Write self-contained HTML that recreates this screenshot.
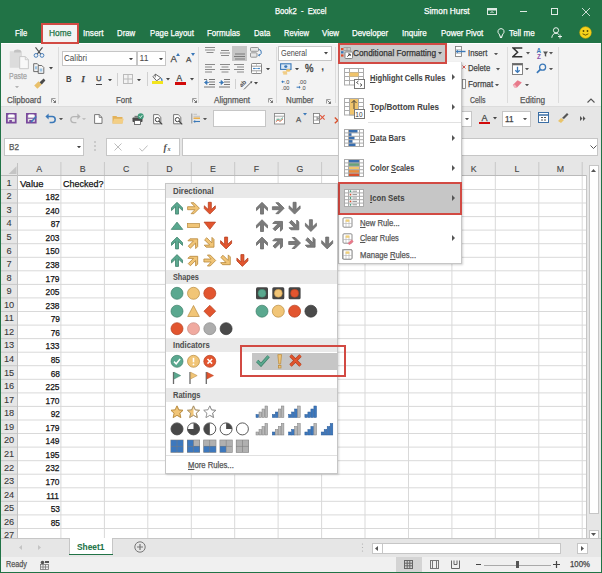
<!DOCTYPE html><html><head><meta charset="utf-8"><style>
html,body{margin:0;padding:0;}
body{width:602px;height:573px;position:relative;overflow:hidden;background:#fff;font-family:"Liberation Sans",sans-serif;}
div{position:absolute;box-sizing:border-box;}
.t{white-space:nowrap;line-height:1;-webkit-text-stroke:0.25px currentColor;}
</style></head><body>

<div style="left:0px;top:0px;width:602px;height:43px;background:#217346"></div>
<div style="left:1px;top:43px;width:600px;height:63px;background:#f3f3f3;border-top:1px solid #fff"></div>
<div style="left:1px;top:106px;width:600px;height:432px;background:#e6e6e6"></div>
<div style="left:1px;top:106px;width:600px;height:1px;background:#dcdcdc"></div>
<div style="left:0px;top:43px;width:1px;height:530px;background:#217346"></div>
<div style="left:601px;top:43px;width:1px;height:530px;background:#217346"></div>
<div style="left:0px;top:572px;width:602px;height:1px;background:#217346"></div>
<div class="t" style="left:274.60px;top:7.05px;font-size:8.8px;transform:scaleX(0.8685);transform-origin:0 0;color:#fff">Book2&nbsp; -&nbsp; Excel</div>
<div class="t" style="left:424.40px;top:7.05px;font-size:8.8px;transform:scaleX(0.9421);transform-origin:0 0;color:#fff">Simon Hurst</div>
<svg style="position:absolute;left:487px;top:8px;" width="10" height="7" viewBox="0 0 10 7"><rect x="0.5" y="0.5" width="9" height="6" fill="none" stroke="rgba(255,255,255,0.85)"/><rect x="1" y="1" width="8" height="1.5" fill="rgba(255,255,255,0.85)"/><path d="M3.5 5L5 3.5L6.5 5" stroke="#fff" fill="none" stroke-width="0.9"/></svg>
<div style="left:520px;top:10.5px;width:7px;height:1px;background:rgba(255,255,255,0.85)"></div>
<div style="left:551px;top:7.5px;width:7px;height:7px;border:1px solid rgba(255,255,255,0.85)"></div>
<svg style="position:absolute;left:582px;top:7.5px;" width="8" height="8" viewBox="0 0 8 8"><path d="M0 0L8 8M8 0L0 8" stroke="rgba(255,255,255,0.85)" stroke-width="0.9"/></svg>
<div style="left:41px;top:23px;width:38px;height:21px;background:#f3f3f3;border:2px solid #d24a43"></div>
<div class="t" style="left:14.75px;top:29.15px;font-size:8.8px;transform:scaleX(0.8646);transform-origin:0 0;color:#fff">File</div>
<div class="t" style="left:48.50px;top:29.15px;font-size:8.8px;transform:scaleX(0.9491);transform-origin:0 0;color:#217346">Home</div>
<div class="t" style="left:83.00px;top:29.15px;font-size:8.8px;transform:scaleX(0.9364);transform-origin:0 0;color:#fff">Insert</div>
<div class="t" style="left:117.30px;top:29.15px;font-size:8.8px;transform:scaleX(0.8857);transform-origin:0 0;color:#fff">Draw</div>
<div class="t" style="left:149.50px;top:29.15px;font-size:8.8px;transform:scaleX(0.8884);transform-origin:0 0;color:#fff">Page Layout</div>
<div class="t" style="left:206.90px;top:29.15px;font-size:8.8px;transform:scaleX(0.9020);transform-origin:0 0;color:#fff">Formulas</div>
<div class="t" style="left:253.60px;top:29.15px;font-size:8.8px;transform:scaleX(0.8812);transform-origin:0 0;color:#fff">Data</div>
<div class="t" style="left:283.50px;top:29.15px;font-size:8.8px;transform:scaleX(0.8627);transform-origin:0 0;color:#fff">Review</div>
<div class="t" style="left:321.70px;top:29.15px;font-size:8.8px;transform:scaleX(0.8985);transform-origin:0 0;color:#fff">View</div>
<div class="t" style="left:352.30px;top:29.15px;font-size:8.8px;transform:scaleX(0.8996);transform-origin:0 0;color:#fff">Developer</div>
<div class="t" style="left:402.30px;top:29.15px;font-size:8.8px;transform:scaleX(0.9173);transform-origin:0 0;color:#fff">Inquire</div>
<div class="t" style="left:441.00px;top:29.15px;font-size:8.8px;transform:scaleX(0.9010);transform-origin:0 0;color:#fff">Power Pivot</div>
<div class="t" style="left:508.70px;top:29.15px;font-size:8.8px;transform:scaleX(0.9213);transform-origin:0 0;color:#fff">Tell me</div>
<svg style="position:absolute;left:497px;top:28px;" width="8" height="10" viewBox="0 0 8 10"><path d="M4 0.6A3 3 0 0 0 1.9 5.8L2.7 7V8.3H5.3V7L6.1 5.8A3 3 0 0 0 4 0.6Z" fill="none" stroke="#fff" stroke-width="0.9"/><path d="M2.9 9.5H5.1" stroke="#fff" stroke-width="0.9"/></svg>
<svg style="position:absolute;left:551px;top:27px;" width="12" height="12" viewBox="0 0 12 12"><circle cx="5" cy="3.3" r="2.6" fill="none" stroke="#fff" stroke-width="0.9"/><path d="M0.8 10.8C1 7.8 2.8 6.3 5 6.3C6.2 6.3 7.2 6.8 7.9 7.5" fill="none" stroke="#fff" stroke-width="0.9"/><path d="M9 7.5V11.5M7 9.5H11" stroke="#fff" stroke-width="0.9"/></svg>
<svg style="position:absolute;left:579px;top:26px;" width="13" height="13" viewBox="0 0 13 13"><circle cx="6.5" cy="6.5" r="5.8" fill="#f7d21c" stroke="#e0b000" stroke-width="0.6"/><circle cx="4.5" cy="5" r="0.9" fill="#5a4a00"/><circle cx="8.5" cy="5" r="0.9" fill="#5a4a00"/><path d="M3.6 7.8Q6.5 10.5 9.4 7.8" stroke="#5a4a00" fill="none" stroke-width="0.9"/></svg>
<svg style="position:absolute;left:8px;top:48px;" width="22" height="22" viewBox="0 0 22 22"><rect x="1.8" y="3.2" width="12.2" height="16.6" fill="#dcdcdc"/><path d="M6 4.5V3.2Q6 1.5 9.5 1.5Q13 1.5 13 3.2V4.5Z" fill="#c2c2c2"/><path d="M11.7 8.6H17.3L20.4 11.7V20.7H11.7Z" fill="#f8f8f8" stroke="#c4c4c4" stroke-width="0.9"/><path d="M17.3 8.6V11.7H20.4" fill="none" stroke="#c4c4c4" stroke-width="0.8"/></svg>
<div class="t" style="left:9.00px;top:72.2px;font-size:8.5px;transform:scaleX(0.8242);transform-origin:0 0;color:#a3a3a3">Paste</div>
<svg style="position:absolute;left:15.3px;top:85.5px;" width="4" height="2.5" viewBox="0 0 4 2.5"><path d="M0 0H4L2 2.4Z" fill="#b5b5b5"/></svg>
<svg style="position:absolute;left:33px;top:47px;" width="12" height="11" viewBox="0 0 12 11"><path d="M2.5 0.3L7.8 7.2M9.5 0.3L4.2 7.2" stroke="#505050" stroke-width="1.1"/><circle cx="3" cy="8.4" r="1.9" fill="none" stroke="#4a80bb" stroke-width="1"/><circle cx="9" cy="8.4" r="1.9" fill="none" stroke="#4a80bb" stroke-width="1"/></svg>
<svg style="position:absolute;left:33px;top:63px;" width="12" height="11" viewBox="0 0 12 11"><path d="M0.7 0.7H4.3L5.8 2.2V8.6H0.7Z" fill="#f4f4f4" stroke="#606060" stroke-width="0.9"/><path d="M5.2 2.5H8.8L10.8 4.5V10.4H5.2Z" fill="#f4f4f4" stroke="#606060" stroke-width="0.9"/><rect x="2" y="3.3" width="2" height="3" fill="#9cc4e4"/><rect x="6.7" y="5.5" width="2.6" height="3" fill="#9cc4e4"/></svg>
<svg style="position:absolute;left:48.5px;top:67px;" width="4" height="2.5" viewBox="0 0 4 2.5"><path d="M0 0H4L2 2.4Z" fill="#444"/></svg>
<svg style="position:absolute;left:33px;top:78px;" width="13" height="11" viewBox="0 0 13 11"><path d="M1.2 7.6L5.6 3.2L8.8 6.4L4.4 10.8Z" fill="#e9c06a"/><path d="M6.6 4.2L10.6 0.6L12.4 2.4L8.8 6.4Z" fill="#4a4a4a"/></svg>
<div class="t" style="left:7.00px;top:96.47px;font-size:8.3px;transform:scaleX(0.9627);transform-origin:0 0;color:#5a5a5a">Clipboard</div>
<svg style="position:absolute;left:51px;top:98px;" width="5" height="5" viewBox="0 0 5 5"><path d="M0.5 4.5V0.5H4.5" fill="none" stroke="#888" stroke-width="0.8"/><path d="M1.5 1.5L4.5 4.5M4.5 2.5V4.5H2.5" fill="none" stroke="#666" stroke-width="0.9"/></svg>
<div style="left:58px;top:47px;width:1px;height:57px;background:#dcdcdc"></div>
<div style="left:61.5px;top:51px;width:75px;height:15px;background:#fff;border:1px solid #c6c6c6"></div>
<div class="t" style="left:64.00px;top:54.25px;font-size:8.8px;transform:scaleX(0.9219);transform-origin:0 0;color:#4a4a4a;-webkit-text-stroke:0">Calibri</div>
<svg style="position:absolute;left:129px;top:57.5px;" width="4" height="2.5" viewBox="0 0 4 2.5"><path d="M0 0H4L2 2.4Z" fill="#444"/></svg>
<div style="left:136.5px;top:51px;width:29.5px;height:15px;background:#fff;border:1px solid #c6c6c6"></div>
<div class="t" style="left:139.50px;top:54.42px;font-size:8.6px;color:#4a4a4a;-webkit-text-stroke:0">11</div>
<svg style="position:absolute;left:159px;top:57.5px;" width="4" height="2.5" viewBox="0 0 4 2.5"><path d="M0 0H4L2 2.4Z" fill="#444"/></svg>
<div class="t" style="left:170.50px;top:54.37px;font-size:9.6px;color:#444">A</div>
<svg style="position:absolute;left:176px;top:53px;" width="4" height="3" viewBox="0 0 4 3"><path d="M0 3L2 0L4 3Z" fill="#3a78b8"/></svg>
<div class="t" style="left:186.00px;top:55.73px;font-size:8px;color:#444">A</div>
<svg style="position:absolute;left:191px;top:53px;" width="4" height="3" viewBox="0 0 4 3"><path d="M0 0L2 3L4 0Z" fill="#3a78b8"/></svg>
<div class="t" style="left:65.80px;top:74.92px;font-size:8.6px;font-weight:bold;-webkit-text-stroke:0.05px currentColor;transform:scaleX(0.9044);transform-origin:0 0;color:#444">B</div>
<div class="t" style="left:81.50px;top:75.3px;font-size:8.5px;color:#444;font-style:italic;font-family:'Liberation Serif',serif;font-weight:bold">I</div>
<div class="t" style="left:96.00px;top:75.4px;font-size:7.8px;color:#444">U</div>
<div style="left:96px;top:84px;width:6px;height:1px;background:#444"></div>
<svg style="position:absolute;left:108px;top:78.5px;" width="4" height="2.5" viewBox="0 0 4 2.5"><path d="M0 0H4L2 2.4Z" fill="#444"/></svg>
<div style="left:117px;top:73px;width:1px;height:13px;background:#d0d0d0"></div>
<svg style="position:absolute;left:123px;top:74px;" width="10" height="10" viewBox="0 0 10 10"><rect x="0.5" y="0.5" width="9" height="9" fill="none" stroke="#bbb"/><path d="M5 0.5V9.5M0.5 5H9.5" stroke="#bbb"/></svg>
<svg style="position:absolute;left:137px;top:78.5px;" width="4" height="2.5" viewBox="0 0 4 2.5"><path d="M0 0H4L2 2.4Z" fill="#444"/></svg>
<div style="left:146.5px;top:72px;width:1px;height:14px;background:#d0d0d0"></div>
<svg style="position:absolute;left:151.5px;top:73px;" width="12" height="9" viewBox="0 0 12 9"><path d="M3.5 1.2L1 3.7L4.6 7.8L8.8 4.8Z" fill="#fff" stroke="#555" stroke-width="0.9" stroke-linejoin="round"/><path d="M3.3 1V4.4" stroke="#555" stroke-width="0.8"/><path d="M8.8 4.8Q10.8 5.6 10.6 7.6Q10.2 8.6 9.4 7.8Q9 6.4 8.8 4.8Z" fill="#3a78b8"/></svg>
<div style="left:152px;top:81px;width:11px;height:3px;background:#f2e41c"></div>
<svg style="position:absolute;left:166px;top:78px;" width="4" height="2.5" viewBox="0 0 4 2.5"><path d="M0 0H4L2 2.4Z" fill="#444"/></svg>
<div class="t" style="left:176.50px;top:74.3px;font-size:8.5px;color:#444">A</div>
<div style="left:175px;top:82px;width:11px;height:3px;background:#d20a0a"></div>
<svg style="position:absolute;left:189.5px;top:78px;" width="4" height="2.5" viewBox="0 0 4 2.5"><path d="M0 0H4L2 2.4Z" fill="#444"/></svg>
<div class="t" style="left:115.60px;top:96.47px;font-size:8.3px;transform:scaleX(0.9518);transform-origin:0 0;color:#5a5a5a">Font</div>
<svg style="position:absolute;left:192px;top:98px;" width="5" height="5" viewBox="0 0 5 5"><path d="M0.5 4.5V0.5H4.5" fill="none" stroke="#888" stroke-width="0.8"/><path d="M1.5 1.5L4.5 4.5M4.5 2.5V4.5H2.5" fill="none" stroke="#666" stroke-width="0.9"/></svg>
<div style="left:198px;top:47px;width:1px;height:56px;background:#dcdcdc"></div>
<div style="left:232px;top:46px;width:15px;height:15px;background:#c6c6c6"></div>
<svg style="position:absolute;left:205px;top:46px;" width="10" height="12" viewBox="0 0 10 12"><rect x="0" y="1" width="10" height="1" fill="#8a8a8a"/><rect x="0" y="3.5" width="10" height="1" fill="#8a8a8a"/><rect x="1.5" y="6" width="7" height="1" fill="#8a8a8a"/></svg>
<svg style="position:absolute;left:219.5px;top:49px;" width="10" height="12" viewBox="0 0 10 12"><rect x="1" y="1" width="8" height="1" fill="#8a8a8a"/><rect x="0" y="3.5" width="10" height="1" fill="#8a8a8a"/><rect x="1" y="6" width="8" height="1" fill="#8a8a8a"/></svg>
<svg style="position:absolute;left:233.5px;top:53px;" width="11" height="12" viewBox="0 0 11 12"><rect x="1" y="0.5" width="10" height="1" fill="#7a7a7a"/><rect x="0" y="3" width="12" height="1" fill="#7a7a7a"/><rect x="1" y="5.5" width="10" height="1" fill="#7a7a7a"/></svg>
<svg style="position:absolute;left:250px;top:47px;" width="13" height="11" viewBox="0 0 13 11"><rect x="0.5" y="0.5" width="8" height="3.8" rx="0.8" fill="#e6e6e6" stroke="#808080" stroke-width="0.8"/><rect x="0.5" y="5.8" width="6.5" height="4.4" rx="0.8" fill="#e6e6e6" stroke="#808080" stroke-width="0.8"/><path d="M8.8 2.4Q12 2.8 11.2 6.4Q10.6 8 8.6 8.2" stroke="#3a78b8" fill="none" stroke-width="1"/><path d="M8 8.2L9.6 6.8V9.6Z" fill="#3a78b8"/></svg>
<svg style="position:absolute;left:204.5px;top:64px;" width="10" height="12" viewBox="0 0 10 12"><rect x="0" y="0" width="10" height="1" fill="#8a8a8a"/><rect x="0" y="2.5" width="7" height="1" fill="#8a8a8a"/><rect x="0" y="5" width="10" height="1" fill="#8a8a8a"/><rect x="0" y="7.5" width="7" height="1" fill="#8a8a8a"/></svg>
<svg style="position:absolute;left:219.5px;top:64px;" width="10" height="12" viewBox="0 0 10 12"><rect x="0" y="0" width="10" height="1" fill="#8a8a8a"/><rect x="1.5" y="2.5" width="7" height="1" fill="#8a8a8a"/><rect x="0" y="5" width="10" height="1" fill="#8a8a8a"/><rect x="1.5" y="7.5" width="7" height="1" fill="#8a8a8a"/></svg>
<svg style="position:absolute;left:234px;top:64px;" width="10" height="12" viewBox="0 0 10 12"><rect x="0" y="0" width="10" height="1" fill="#8a8a8a"/><rect x="3" y="2.5" width="7" height="1" fill="#8a8a8a"/><rect x="0" y="5" width="10" height="1" fill="#8a8a8a"/><rect x="3" y="7.5" width="7" height="1" fill="#8a8a8a"/></svg>
<svg style="position:absolute;left:250.5px;top:62.5px;" width="11" height="11" viewBox="0 0 11 11"><rect x="0.5" y="0.5" width="10" height="10" rx="0.8" fill="#fff" stroke="#777" stroke-width="0.9"/><path d="M0.5 3.2H10.5M0.5 7.8H10.5" stroke="#888" stroke-width="0.8"/><path d="M5.5 0.5V3.2M5.5 7.8V10.5" stroke="#aaa" stroke-width="0.7"/><path d="M2.2 5.5H8.8" stroke="#6fa8d8" stroke-width="0.9"/><circle cx="3" cy="5.5" r="0.8" fill="#3a78b8"/><circle cx="8" cy="5.5" r="0.8" fill="#3a78b8"/></svg>
<svg style="position:absolute;left:265.5px;top:67.5px;" width="4" height="2.5" viewBox="0 0 4 2.5"><path d="M0 0H4L2 2.4Z" fill="#444"/></svg>
<svg style="position:absolute;left:204px;top:79px;" width="11" height="9" viewBox="0 0 11 9"><path d="M5 0.5H11M5 3H11M5 5.5H11M0 8H11M0 0.5H3" stroke="#777" stroke-width="1"/><path d="M0.5 3.5L3 1.5V5.5Z M1 3.5H5" fill="#3a78b8" stroke="#3a78b8" stroke-width="0.8"/></svg>
<svg style="position:absolute;left:219px;top:79px;" width="11" height="9" viewBox="0 0 11 9"><path d="M5 0.5H11M5 3H11M5 5.5H11M0 8H11" stroke="#777" stroke-width="1"/><path d="M4.5 3.5L2 1.5V5.5Z M0 3.5H3" fill="#3a78b8" stroke="#3a78b8" stroke-width="0.8"/></svg>
<div style="left:235px;top:79px;width:1px;height:10px;background:#d0d0d0"></div>
<svg style="position:absolute;left:240px;top:78.5px;" width="13" height="11" viewBox="0 0 13 11"><text x="0" y="0" font-size="6.2" fill="#555" font-family="Liberation Sans" font-weight="bold" transform="translate(1.6 8.6) rotate(-45)">ab</text><path d="M4 10.4L11.4 3" stroke="#555" stroke-width="0.9"/><path d="M12.4 2L10 2.8L11.6 4.4Z" fill="#555"/></svg>
<svg style="position:absolute;left:253.5px;top:82px;" width="4" height="2.5" viewBox="0 0 4 2.5"><path d="M0 0H4L2 2.4Z" fill="#444"/></svg>
<div class="t" style="left:213.50px;top:96.47px;font-size:8.3px;transform:scaleX(0.9758);transform-origin:0 0;color:#5a5a5a">Alignment</div>
<svg style="position:absolute;left:268px;top:98px;" width="5" height="5" viewBox="0 0 5 5"><path d="M0.5 4.5V0.5H4.5" fill="none" stroke="#888" stroke-width="0.8"/><path d="M1.5 1.5L4.5 4.5M4.5 2.5V4.5H2.5" fill="none" stroke="#666" stroke-width="0.9"/></svg>
<div style="left:275.5px;top:47px;width:1px;height:56px;background:#dcdcdc"></div>
<div style="left:278px;top:45.5px;width:53.5px;height:15px;background:#fff;border:1px solid #c6c6c6"></div>
<div class="t" style="left:281.00px;top:49.35px;font-size:8.8px;transform:scaleX(0.8299);transform-origin:0 0;color:#4a4a4a;-webkit-text-stroke:0">General</div>
<svg style="position:absolute;left:324px;top:52px;" width="4" height="2.5" viewBox="0 0 4 2.5"><path d="M0 0H4L2 2.4Z" fill="#444"/></svg>
<svg style="position:absolute;left:280px;top:62.5px;" width="12" height="12" viewBox="0 0 12 12"><rect x="0.6" y="0.8" width="10.4" height="5.6" fill="#dbe8f5" stroke="#3a78b8" stroke-width="1.1"/><ellipse cx="5.8" cy="3.6" rx="1.6" ry="1.4" fill="#3a78b8"/><ellipse cx="8.3" cy="7.4" rx="2.3" ry="1.3" fill="#f0c46c"/><rect x="2.6" y="8.4" width="4.5" height="1.4" fill="#f0c46c"/><rect x="3.2" y="10.2" width="4" height="1.3" fill="#f0c46c"/></svg>
<svg style="position:absolute;left:295px;top:67.5px;" width="4" height="2.5" viewBox="0 0 4 2.5"><path d="M0 0H4L2 2.4Z" fill="#444"/></svg>
<div class="t" style="left:305.00px;top:64.03px;font-size:10px;transform:scaleX(0.9551);transform-origin:0 0;color:#444;-webkit-text-stroke:0.35px #444">%</div>
<div class="t" style="left:321.30px;top:62.03px;font-size:10px;font-weight:bold;-webkit-text-stroke:0.05px currentColor;color:#444">,</div>
<svg style="position:absolute;left:280.5px;top:78.5px;" width="11" height="11" viewBox="0 0 11 11"><text x="3.6" y="5" font-size="5.6" fill="#444" font-family="Liberation Sans">.0</text><text x="0.6" y="10.6" font-size="5.6" fill="#444" font-family="Liberation Sans">.00</text><path d="M0.8 2.8H3.6" stroke="#3a78b8" stroke-width="1"/><path d="M0.4 2.8L2 1.3V4.3Z" fill="#3a78b8"/></svg>
<svg style="position:absolute;left:295.5px;top:78.5px;" width="11" height="11" viewBox="0 0 11 11"><text x="2.5" y="5" font-size="5.6" fill="#444" font-family="Liberation Sans">.00</text><text x="5" y="10.6" font-size="5.6" fill="#444" font-family="Liberation Sans">.0</text><path d="M0.6 8.2H4" stroke="#3a78b8" stroke-width="1"/><path d="M4.6 8.2L3 6.7V9.7Z" fill="#3a78b8"/></svg>
<div class="t" style="left:285.60px;top:96.47px;font-size:8.3px;transform:scaleX(0.9388);transform-origin:0 0;color:#5a5a5a">Number</div>
<svg style="position:absolute;left:326px;top:99px;" width="5" height="5" viewBox="0 0 5 5"><path d="M0.5 4.5V0.5H4.5" fill="none" stroke="#888" stroke-width="0.8"/><path d="M1.5 1.5L4.5 4.5M4.5 2.5V4.5H2.5" fill="none" stroke="#666" stroke-width="0.9"/></svg>
<div style="left:334.5px;top:47px;width:1px;height:56px;background:#dcdcdc"></div>
<svg style="position:absolute;left:455px;top:46px;" width="11" height="12" viewBox="0 0 11 12"><rect x="0.5" y="0.5" width="6" height="10" fill="#fff" stroke="#777" stroke-width="0.8"/><path d="M0.5 3.8H6.5M0.5 7.2H6.5" stroke="#999" stroke-width="0.7"/><path d="M1 5.5H10.5" stroke="#3a78b8" stroke-width="1.4"/><path d="M1 5.5L3 3.8V7.2Z" fill="#3a78b8"/></svg>
<div class="t" style="left:468.00px;top:48.85px;font-size:8.8px;transform:scaleX(0.8773);transform-origin:0 0;color:#444">Insert</div>
<svg style="position:absolute;left:494px;top:52.5px;" width="4" height="2.5" viewBox="0 0 4 2.5"><path d="M0 0H4L2 2.4Z" fill="#555"/></svg>
<svg style="position:absolute;left:462px;top:65px;" width="4" height="5" viewBox="0 0 4 5"><path d="M0.5 0.5L3.5 3.5M3.5 0.5L0.5 3.5" stroke="#d24a43" stroke-width="0.9"/></svg>
<div class="t" style="left:468.00px;top:64.15px;font-size:8.8px;transform:scaleX(0.8729);transform-origin:0 0;color:#444">Delete</div>
<svg style="position:absolute;left:496px;top:68px;" width="4" height="2.5" viewBox="0 0 4 2.5"><path d="M0 0H4L2 2.4Z" fill="#555"/></svg>
<svg style="position:absolute;left:461.5px;top:79px;" width="4" height="10" viewBox="0 0 4 10"><rect x="0.5" y="0.5" width="3" height="9" fill="#fff" stroke="#777" stroke-width="0.8"/></svg>
<div class="t" style="left:468.00px;top:79.65px;font-size:8.8px;transform:scaleX(0.9048);transform-origin:0 0;color:#444">Format</div>
<svg style="position:absolute;left:495px;top:83.5px;" width="4" height="2.5" viewBox="0 0 4 2.5"><path d="M0 0H4L2 2.4Z" fill="#555"/></svg>
<div class="t" style="left:470.30px;top:96.47px;font-size:8.3px;transform:scaleX(0.8339);transform-origin:0 0;color:#5a5a5a">Cells</div>
<div style="left:506.5px;top:47px;width:1px;height:56px;background:#dcdcdc"></div>
<svg style="position:absolute;left:511.5px;top:47px;" width="11" height="11" viewBox="0 0 11 11"><path d="M10.3 0.9H1L5.6 5.3L1 9.7H10.3" fill="none" stroke="#333" stroke-width="1.5" stroke-linejoin="miter"/></svg>
<svg style="position:absolute;left:526px;top:52px;" width="4" height="2.5" viewBox="0 0 4 2.5"><path d="M0 0H4L2 2.4Z" fill="#555"/></svg>
<svg style="position:absolute;left:535.5px;top:46.5px;" width="15" height="13" viewBox="0 0 15 13"><text x="0.6" y="5.5" font-size="6.3" fill="#3a78b8" font-family="Liberation Sans" font-weight="bold">A</text><text x="0.9" y="12.3" font-size="6.3" fill="#8b4fa8" font-family="Liberation Sans" font-weight="bold">Z</text><path d="M7 4.6H12L10.2 7V9.8L8.8 8.9V7Z" fill="#555"/></svg>
<svg style="position:absolute;left:549px;top:52px;" width="4" height="2.5" viewBox="0 0 4 2.5"><path d="M0 0H4L2 2.4Z" fill="#555"/></svg>
<svg style="position:absolute;left:511.5px;top:63px;" width="11" height="12" viewBox="0 0 11 12"><rect x="0.5" y="0.5" width="10" height="11" fill="#fff" stroke="#777" stroke-width="0.9"/><rect x="0.5" y="0.5" width="10" height="1.8" fill="#666"/><path d="M5.5 3.8V9.3M3.3 7.2L5.5 9.4L7.7 7.2" stroke="#3a78b8" stroke-width="1.3" fill="none"/></svg>
<svg style="position:absolute;left:525px;top:67.5px;" width="4" height="2.5" viewBox="0 0 4 2.5"><path d="M0 0H4L2 2.4Z" fill="#555"/></svg>
<svg style="position:absolute;left:536px;top:63px;" width="11" height="11" viewBox="0 0 11 11"><circle cx="6.6" cy="4.2" r="3" fill="none" stroke="#3a78b8" stroke-width="1.3"/><path d="M4.4 6.4L0.9 9.9" stroke="#3a78b8" stroke-width="1.7"/></svg>
<svg style="position:absolute;left:549px;top:67.5px;" width="4" height="2.5" viewBox="0 0 4 2.5"><path d="M0 0H4L2 2.4Z" fill="#555"/></svg>
<svg style="position:absolute;left:512px;top:78.5px;" width="11" height="9" viewBox="0 0 11 9"><path d="M0.8 6L5.6 1.2L9.8 3.6L5 8.4H2.6Z" fill="#e8798a"/><path d="M0.8 6L2.6 8.4H5L3 5.6Z" fill="#f2b4be"/></svg>
<svg style="position:absolute;left:525px;top:83.5px;" width="4" height="2.5" viewBox="0 0 4 2.5"><path d="M0 0H4L2 2.4Z" fill="#555"/></svg>
<div class="t" style="left:520.00px;top:96.47px;font-size:8.3px;transform:scaleX(0.9843);transform-origin:0 0;color:#5a5a5a">Editing</div>
<div style="left:558.3px;top:47px;width:1px;height:56px;background:#dcdcdc"></div>
<svg style="position:absolute;left:587px;top:98px;" width="8" height="5" viewBox="0 0 8 5"><path d="M0.5 4.5L4 1L7.5 4.5" stroke="#555" fill="none" stroke-width="1.1"/></svg>
<svg style="position:absolute;left:6px;top:113px;" width="11" height="11" viewBox="0 0 11 11"><path d="M0.9 0.9H9.7V9.7H0.9Z" fill="none" stroke="#7a4a9c" stroke-width="1.8"/><rect x="2.8" y="1.5" width="5" height="3.2" fill="#fff"/><rect x="1.8" y="4.7" width="7" height="1" fill="#7a4a9c"/><rect x="3.3" y="7" width="2.6" height="2" fill="#7a4a9c"/></svg>
<svg style="position:absolute;left:26px;top:113px;" width="11" height="11" viewBox="0 0 11 11"><path d="M0.9 0.9H9.7V9.7H0.9Z" fill="none" stroke="#7a4a9c" stroke-width="1.8"/><rect x="2.8" y="1.5" width="5" height="3.2" fill="#fff"/><rect x="1.8" y="4.7" width="7" height="1" fill="#7a4a9c"/><rect x="3.3" y="7" width="2.6" height="2" fill="#7a4a9c"/><path d="M5 9.3L10.2 3.6" stroke="#3a78b8" stroke-width="1.5"/></svg>
<svg style="position:absolute;left:44.5px;top:113px;" width="12" height="11" viewBox="0 0 12 11"><path d="M2.8 3.6H7.2A3 3 0 0 1 7.2 9.6H4.6" fill="none" stroke="#3a78b8" stroke-width="1.5"/><path d="M0.4 3.6L3.6 0.6V6.6Z" fill="#3a78b8"/></svg>
<svg style="position:absolute;left:58.5px;top:117.5px;" width="4" height="2.5" viewBox="0 0 4 2.5"><path d="M0 0H4L2 2.4Z" fill="#555"/></svg>
<svg style="position:absolute;left:68.5px;top:113px;" width="12" height="11" viewBox="0 0 12 11"><path d="M9.2 3.6H4.8A3 3 0 0 0 4.8 9.6H7.4" fill="none" stroke="#b5b5b5" stroke-width="1.3"/><path d="M11.6 3.6L8.4 0.6V6.6Z" fill="#b5b5b5"/></svg>
<svg style="position:absolute;left:82px;top:117.5px;" width="4" height="2.5" viewBox="0 0 4 2.5"><path d="M0 0H4L2 2.4Z" fill="#c0c0c0"/></svg>
<svg style="position:absolute;left:93.5px;top:114px;" width="9" height="10" viewBox="0 0 9 10"><path d="M0.6 0.6H5.2L8 3.4V9.4H0.6Z" fill="#fff" stroke="#6a6a6a" stroke-width="0.9"/><path d="M5.2 0.6V3.4H8" fill="none" stroke="#6a6a6a" stroke-width="0.8"/></svg>
<svg style="position:absolute;left:112px;top:114.5px;" width="12" height="9" viewBox="0 0 12 9"><path d="M0.5 1H4.3L5.3 2H10.5V8.5H0.5Z" fill="#e3b25a"/><path d="M0.5 8.5L2 3.8H11.8L10.4 8.5Z" fill="#f3cf86"/></svg>
<svg style="position:absolute;left:132px;top:112.5px;" width="12" height="12" viewBox="0 0 12 12"><rect x="0.5" y="4.5" width="10" height="4.5" rx="0.8" fill="#4a4a4a"/><rect x="2.5" y="7.5" width="6" height="4" fill="#fff" stroke="#555" stroke-width="0.8"/><rect x="2.5" y="2.8" width="5" height="1.7" fill="#777"/><circle cx="8.7" cy="3.3" r="3" fill="#3f9a7a"/><path d="M7.2 3.3L8.4 4.5L10.2 2.3" stroke="#fff" fill="none" stroke-width="0.9"/></svg>
<svg style="position:absolute;left:153.2px;top:113.5px;" width="10" height="11" viewBox="0 0 10 11"><path d="M0.6 0.6H5.2L7.8 3.2V9.8H0.6Z" fill="#fff" stroke="#6a6a6a" stroke-width="0.9"/><circle cx="4.4" cy="5.6" r="2.1" fill="none" stroke="#444" stroke-width="1"/><path d="M5.9 7.1L9.2 10.4" stroke="#444" stroke-width="1.3"/></svg>
<svg style="position:absolute;left:172.5px;top:113.5px;" width="10" height="11" viewBox="0 0 10 11"><path d="M0.6 0.6H5.2L7.8 3.2V9.8H0.6Z" fill="#fff" stroke="#6a6a6a" stroke-width="0.9"/><circle cx="4.4" cy="5.6" r="2.1" fill="none" stroke="#444" stroke-width="1"/><path d="M5.9 7.1L9.2 10.4" stroke="#444" stroke-width="1.3"/></svg>
<svg style="position:absolute;left:190.5px;top:113px;" width="10" height="11" viewBox="0 0 10 11"><path d="M0.8 0.5V10.5" stroke="#888" stroke-width="0.9"/><path d="M2.5 1.3H6M2.5 3.3H9" stroke="#bdbdbd" stroke-width="0.9"/><path d="M2.5 5.2H9" stroke="#e9a83a" stroke-width="1.4"/><path d="M3 8.5H9" stroke="#3a78b8" stroke-width="1.1"/><path d="M2.2 8.5L4.2 7V10Z" fill="#3a78b8"/></svg>
<svg style="position:absolute;left:203px;top:117.5px;" width="4" height="2.5" viewBox="0 0 4 2.5"><path d="M0 0H4L2 2.4Z" fill="#555"/></svg>
<div style="left:213px;top:110px;width:53px;height:17px;background:#fff;border:1px solid #c6c6c6"></div>
<svg style="position:absolute;left:273.5px;top:112.5px;" width="11" height="12" viewBox="0 0 11 12"><rect x="0.5" y="0.5" width="10" height="10.5" fill="#fff" stroke="#8a8a8a" stroke-width="0.9"/><path d="M0.5 3.2H10.5" stroke="#8a8a8a" stroke-width="0.8"/><path d="M2 5.2H9" stroke="#ccc" stroke-width="0.6"/><path d="M1.8 9L4 7L6 8.5L9 6" stroke="#e06040" fill="none" stroke-width="0.8"/><path d="M1.8 7.5L4 6L6.2 7.3L9 4.5" stroke="#3f9a7a" fill="none" stroke-width="0.8"/></svg>
<div class="t" style="left:296.30px;top:116.0px;font-size:7.8px;transform:scaleX(0.9950);transform-origin:0 0;color:#555">A</div>
<svg style="position:absolute;left:302.5px;top:113px;" width="4" height="2.5" viewBox="0 0 4 2.5"><path d="M0 0H4L2 2.4Z" fill="#3a78b8"/></svg>
<svg style="position:absolute;left:312.5px;top:113px;" width="13" height="11" viewBox="0 0 13 11"><rect x="0.5" y="0.5" width="6" height="10" fill="#fff" stroke="#777" stroke-width="0.8"/><path d="M0.5 3.8H6.5M0.5 7.2H6.5" stroke="#888" stroke-width="0.7"/><path d="M3.5 3.5L7 5.5L3.5 7.5" fill="#9a9a9a"/><path d="M7.2 2.2L11.6 6.6M11.6 2.2L7.2 6.6" stroke="#e0553a" stroke-width="1.1"/></svg>
<svg style="position:absolute;left:334px;top:116.5px;" width="5" height="7" viewBox="0 0 5 7"><path d="M0.8 0.6L3.8 3.4L0.8 6.2" stroke="#d9502c" stroke-width="1.4" fill="none"/></svg>
<div style="left:460px;top:110.5px;width:11.5px;height:16.5px;background:#fff;border:1px solid #c6c6c6;border-left:none"></div>
<svg style="position:absolute;left:464.7px;top:117.5px;" width="4" height="2.5" viewBox="0 0 4 2.5"><path d="M0 0H4L2 2.4Z" fill="#555"/></svg>
<div class="t" style="left:481.50px;top:114.38px;font-size:9px;color:#444">A</div>
<div style="left:479px;top:122px;width:11px;height:2px;background:#d20a0a"></div>
<svg style="position:absolute;left:493px;top:117px;" width="4" height="2.5" viewBox="0 0 4 2.5"><path d="M0 0H4L2 2.4Z" fill="#444"/></svg>
<div style="left:502px;top:110.5px;width:28.5px;height:16.5px;background:#fff;border:1px solid #c6c6c6"></div>
<div class="t" style="left:505.00px;top:115.56px;font-size:8.2px;color:#444">11</div>
<svg style="position:absolute;left:523.3px;top:117.5px;" width="4" height="2.5" viewBox="0 0 4 2.5"><path d="M0 0H4L2 2.4Z" fill="#555"/></svg>
<svg style="position:absolute;left:538px;top:112px;" width="11" height="11" viewBox="0 0 11 11"><rect x="0.5" y="0.5" width="10" height="10" fill="#fff" stroke="#3a6ea5"/><path d="M0.5 3H10.5" stroke="#3a6ea5" stroke-width="1.5"/><path d="M3 5.5H5M6 5.5H8M3 8H5M6 8H8" stroke="#555"/></svg>
<svg style="position:absolute;left:557px;top:112px;" width="12" height="11" viewBox="0 0 12 11"><path d="M1 9L4 6L7 8L4 11Z" fill="#e9c46a"/><path d="M5 6L10 1L11.5 2.5L7 7Z" fill="#555"/></svg>
<svg style="position:absolute;left:580px;top:116px;" width="6" height="5" viewBox="0 0 6 5"><path d="M0 0L2.5 2.5L0 5ZM3 0L5.5 2.5L3 5Z" fill="#555"/></svg>
<div style="left:4px;top:138px;width:80px;height:17.5px;background:#fff;border:1px solid #c6c6c6"></div>
<div class="t" style="left:9.00px;top:142.85px;font-size:8.8px;transform:scaleX(0.9276);transform-origin:0 0;color:#555">B2</div>
<svg style="position:absolute;left:77px;top:145.5px;" width="4" height="2.5" viewBox="0 0 4 2.5"><path d="M0 0H4L2 2.4Z" fill="#444"/></svg>
<svg style="position:absolute;left:94px;top:141px;" width="2" height="10" viewBox="0 0 2 10"><circle cx="1" cy="1" r="0.7" fill="#999"/><circle cx="1" cy="5" r="0.7" fill="#999"/><circle cx="1" cy="9" r="0.7" fill="#999"/></svg>
<div style="left:106px;top:138px;width:74px;height:17.5px;background:#fff;border:1px solid #c6c6c6"></div>
<svg style="position:absolute;left:114px;top:143px;" width="8" height="8" viewBox="0 0 8 8"><path d="M0.5 0.5L7.5 7.5M7.5 0.5L0.5 7.5" stroke="#b5b5b5" stroke-width="0.9"/></svg>
<svg style="position:absolute;left:138.5px;top:144.5px;" width="9" height="7" viewBox="0 0 9 7"><path d="M0.5 3.3L3.2 6.2L8.6 0.5" stroke="#b5b5b5" fill="none" stroke-width="0.9"/></svg>
<svg style="position:absolute;left:162.5px;top:141.5px;" width="11" height="11" viewBox="0 0 11 11"><text x="0.5" y="8.6" font-size="9.5" font-style="italic" font-weight="bold" fill="#505050" font-family="Liberation Serif">f</text><text x="4.6" y="8.6" font-size="6.2" font-style="italic" font-weight="bold" fill="#505050" font-family="Liberation Serif">x</text></svg>
<div style="left:182px;top:138px;width:416px;height:17.5px;background:#fff;border:1px solid #c6c6c6"></div>
<svg style="position:absolute;left:590px;top:145px;" width="7" height="4" viewBox="0 0 7 4"><path d="M0.5 0.5L3.5 3.5L6.5 0.5" stroke="#555" fill="none"/></svg>
<div style="left:18px;top:176px;width:569px;height:362px;background:#fff"></div>
<div style="left:1px;top:176px;width:17px;height:362px;background:#e6e6e6"></div>
<svg style="position:absolute;left:7.5px;top:165.5px;" width="9" height="8.5" viewBox="0 0 9 8.5"><path d="M8.5 0.3V8.3H0.3Z" fill="#c4c4c4"/></svg>
<div style="left:1px;top:175px;width:586px;height:1px;background:#bababa"></div>
<div style="left:17px;top:163px;width:1px;height:375px;background:#c2c2c2"></div>
<svg style="position:absolute;left:18px;top:176px;" width="569" height="362" viewBox="0 0 569 362"><rect x="42.4" y="0" width="1" height="362" fill="#d9d9d9"/><rect x="85.9" y="0" width="1" height="362" fill="#d9d9d9"/><rect x="129.3" y="0" width="1" height="362" fill="#d9d9d9"/><rect x="172.8" y="0" width="1" height="362" fill="#d9d9d9"/><rect x="216.2" y="0" width="1" height="362" fill="#d9d9d9"/><rect x="259.6" y="0" width="1" height="362" fill="#d9d9d9"/><rect x="303.1" y="0" width="1" height="362" fill="#d9d9d9"/><rect x="346.5" y="0" width="1" height="362" fill="#d9d9d9"/><rect x="390.0" y="0" width="1" height="362" fill="#d9d9d9"/><rect x="433.4" y="0" width="1" height="362" fill="#d9d9d9"/><rect x="476.8" y="0" width="1" height="362" fill="#d9d9d9"/><rect x="520.3" y="0" width="1" height="362" fill="#d9d9d9"/><rect x="563.7" y="0" width="1" height="362" fill="#d9d9d9"/><rect x="0" y="13.0" width="569" height="1" fill="#d9d9d9"/><rect x="0" y="26.5" width="569" height="1" fill="#d9d9d9"/><rect x="0" y="40.1" width="569" height="1" fill="#d9d9d9"/><rect x="0" y="53.6" width="569" height="1" fill="#d9d9d9"/><rect x="0" y="67.2" width="569" height="1" fill="#d9d9d9"/><rect x="0" y="80.8" width="569" height="1" fill="#d9d9d9"/><rect x="0" y="94.3" width="569" height="1" fill="#d9d9d9"/><rect x="0" y="107.9" width="569" height="1" fill="#d9d9d9"/><rect x="0" y="121.4" width="569" height="1" fill="#d9d9d9"/><rect x="0" y="135.0" width="569" height="1" fill="#d9d9d9"/><rect x="0" y="148.6" width="569" height="1" fill="#d9d9d9"/><rect x="0" y="162.1" width="569" height="1" fill="#d9d9d9"/><rect x="0" y="175.7" width="569" height="1" fill="#d9d9d9"/><rect x="0" y="189.2" width="569" height="1" fill="#d9d9d9"/><rect x="0" y="202.8" width="569" height="1" fill="#d9d9d9"/><rect x="0" y="216.4" width="569" height="1" fill="#d9d9d9"/><rect x="0" y="229.9" width="569" height="1" fill="#d9d9d9"/><rect x="0" y="243.5" width="569" height="1" fill="#d9d9d9"/><rect x="0" y="257.0" width="569" height="1" fill="#d9d9d9"/><rect x="0" y="270.6" width="569" height="1" fill="#d9d9d9"/><rect x="0" y="284.2" width="569" height="1" fill="#d9d9d9"/><rect x="0" y="297.7" width="569" height="1" fill="#d9d9d9"/><rect x="0" y="311.3" width="569" height="1" fill="#d9d9d9"/><rect x="0" y="324.8" width="569" height="1" fill="#d9d9d9"/><rect x="0" y="338.4" width="569" height="1" fill="#d9d9d9"/><rect x="0" y="352.0" width="569" height="1" fill="#d9d9d9"/><rect x="0" y="365.5" width="569" height="1" fill="#d9d9d9"/></svg>
<svg style="position:absolute;left:1px;top:176px;" width="16" height="362" viewBox="0 0 16 362"><rect x="0" y="13.0" width="16" height="1" fill="#c8c8c8"/><rect x="0" y="26.5" width="16" height="1" fill="#c8c8c8"/><rect x="0" y="40.1" width="16" height="1" fill="#c8c8c8"/><rect x="0" y="53.6" width="16" height="1" fill="#c8c8c8"/><rect x="0" y="67.2" width="16" height="1" fill="#c8c8c8"/><rect x="0" y="80.8" width="16" height="1" fill="#c8c8c8"/><rect x="0" y="94.3" width="16" height="1" fill="#c8c8c8"/><rect x="0" y="107.9" width="16" height="1" fill="#c8c8c8"/><rect x="0" y="121.4" width="16" height="1" fill="#c8c8c8"/><rect x="0" y="135.0" width="16" height="1" fill="#c8c8c8"/><rect x="0" y="148.6" width="16" height="1" fill="#c8c8c8"/><rect x="0" y="162.1" width="16" height="1" fill="#c8c8c8"/><rect x="0" y="175.7" width="16" height="1" fill="#c8c8c8"/><rect x="0" y="189.2" width="16" height="1" fill="#c8c8c8"/><rect x="0" y="202.8" width="16" height="1" fill="#c8c8c8"/><rect x="0" y="216.4" width="16" height="1" fill="#c8c8c8"/><rect x="0" y="229.9" width="16" height="1" fill="#c8c8c8"/><rect x="0" y="243.5" width="16" height="1" fill="#c8c8c8"/><rect x="0" y="257.0" width="16" height="1" fill="#c8c8c8"/><rect x="0" y="270.6" width="16" height="1" fill="#c8c8c8"/><rect x="0" y="284.2" width="16" height="1" fill="#c8c8c8"/><rect x="0" y="297.7" width="16" height="1" fill="#c8c8c8"/><rect x="0" y="311.3" width="16" height="1" fill="#c8c8c8"/><rect x="0" y="324.8" width="16" height="1" fill="#c8c8c8"/><rect x="0" y="338.4" width="16" height="1" fill="#c8c8c8"/><rect x="0" y="352.0" width="16" height="1" fill="#c8c8c8"/><rect x="0" y="365.5" width="16" height="1" fill="#c8c8c8"/></svg>
<svg style="position:absolute;left:18px;top:162px;" width="569" height="13" viewBox="0 0 569 13"><rect x="42.4" y="0" width="1" height="13" fill="#c8c8c8"/><rect x="85.9" y="0" width="1" height="13" fill="#c8c8c8"/><rect x="129.3" y="0" width="1" height="13" fill="#c8c8c8"/><rect x="172.8" y="0" width="1" height="13" fill="#c8c8c8"/><rect x="216.2" y="0" width="1" height="13" fill="#c8c8c8"/><rect x="259.6" y="0" width="1" height="13" fill="#c8c8c8"/><rect x="303.1" y="0" width="1" height="13" fill="#c8c8c8"/><rect x="346.5" y="0" width="1" height="13" fill="#c8c8c8"/><rect x="390.0" y="0" width="1" height="13" fill="#c8c8c8"/><rect x="433.4" y="0" width="1" height="13" fill="#c8c8c8"/><rect x="476.8" y="0" width="1" height="13" fill="#c8c8c8"/><rect x="520.3" y="0" width="1" height="13" fill="#c8c8c8"/><rect x="563.7" y="0" width="1" height="13" fill="#c8c8c8"/></svg>
<div class="t" style="left:29.22px;width:20px;text-align:center;top:165.30475px;font-size:8.8px;color:#444;-webkit-text-stroke:0.1px #444">A</div>
<div class="t" style="left:72.66px;width:20px;text-align:center;top:165.30475px;font-size:8.8px;color:#444;-webkit-text-stroke:0.1px #444">B</div>
<div class="t" style="left:116.1px;width:20px;text-align:center;top:165.30475px;font-size:8.8px;color:#444;-webkit-text-stroke:0.1px #444">C</div>
<div class="t" style="left:159.54px;width:20px;text-align:center;top:165.30475px;font-size:8.8px;color:#444;-webkit-text-stroke:0.1px #444">D</div>
<div class="t" style="left:202.98px;width:20px;text-align:center;top:165.30475px;font-size:8.8px;color:#444;-webkit-text-stroke:0.1px #444">E</div>
<div class="t" style="left:246.41999999999996px;width:20px;text-align:center;top:165.30475px;font-size:8.8px;color:#444;-webkit-text-stroke:0.1px #444">F</div>
<div class="t" style="left:289.86px;width:20px;text-align:center;top:165.30475px;font-size:8.8px;color:#444;-webkit-text-stroke:0.1px #444">G</div>
<div class="t" style="left:333.29999999999995px;width:20px;text-align:center;top:165.30475px;font-size:8.8px;color:#444;-webkit-text-stroke:0.1px #444">H</div>
<div class="t" style="left:376.74px;width:20px;text-align:center;top:165.30475px;font-size:8.8px;color:#444;-webkit-text-stroke:0.1px #444">I</div>
<div class="t" style="left:420.17999999999995px;width:20px;text-align:center;top:165.30475px;font-size:8.8px;color:#444;-webkit-text-stroke:0.1px #444">J</div>
<div class="t" style="left:463.62px;width:20px;text-align:center;top:165.30475px;font-size:8.8px;color:#444;-webkit-text-stroke:0.1px #444">K</div>
<div class="t" style="left:507.05999999999995px;width:20px;text-align:center;top:165.30475px;font-size:8.8px;color:#444;-webkit-text-stroke:0.1px #444">L</div>
<div class="t" style="left:550.5px;width:20px;text-align:center;top:165.30475px;font-size:8.8px;color:#444;-webkit-text-stroke:0.1px #444">M</div>
<div class="t" style="left:1px;width:16px;text-align:center;top:178.77px;font-size:9.2px;color:#3a3a3a;-webkit-text-stroke:0.1px #3a3a3a">1</div>
<div class="t" style="left:1px;width:16px;text-align:center;top:192.33px;font-size:9.2px;color:#3a3a3a;-webkit-text-stroke:0.1px #3a3a3a">2</div>
<div class="t" style="left:1px;width:16px;text-align:center;top:205.89px;font-size:9.2px;color:#3a3a3a;-webkit-text-stroke:0.1px #3a3a3a">3</div>
<div class="t" style="left:1px;width:16px;text-align:center;top:219.45px;font-size:9.2px;color:#3a3a3a;-webkit-text-stroke:0.1px #3a3a3a">4</div>
<div class="t" style="left:1px;width:16px;text-align:center;top:233.01px;font-size:9.2px;color:#3a3a3a;-webkit-text-stroke:0.1px #3a3a3a">5</div>
<div class="t" style="left:1px;width:16px;text-align:center;top:246.57px;font-size:9.2px;color:#3a3a3a;-webkit-text-stroke:0.1px #3a3a3a">6</div>
<div class="t" style="left:1px;width:16px;text-align:center;top:260.13px;font-size:9.2px;color:#3a3a3a;-webkit-text-stroke:0.1px #3a3a3a">7</div>
<div class="t" style="left:1px;width:16px;text-align:center;top:273.69px;font-size:9.2px;color:#3a3a3a;-webkit-text-stroke:0.1px #3a3a3a">8</div>
<div class="t" style="left:1px;width:16px;text-align:center;top:287.25px;font-size:9.2px;color:#3a3a3a;-webkit-text-stroke:0.1px #3a3a3a">9</div>
<div class="t" style="left:1px;width:16px;text-align:center;top:300.81px;font-size:9.2px;color:#3a3a3a;-webkit-text-stroke:0.1px #3a3a3a">10</div>
<div class="t" style="left:1px;width:16px;text-align:center;top:314.37px;font-size:9.2px;color:#3a3a3a;-webkit-text-stroke:0.1px #3a3a3a">11</div>
<div class="t" style="left:1px;width:16px;text-align:center;top:327.93px;font-size:9.2px;color:#3a3a3a;-webkit-text-stroke:0.1px #3a3a3a">12</div>
<div class="t" style="left:1px;width:16px;text-align:center;top:341.49px;font-size:9.2px;color:#3a3a3a;-webkit-text-stroke:0.1px #3a3a3a">13</div>
<div class="t" style="left:1px;width:16px;text-align:center;top:355.05px;font-size:9.2px;color:#3a3a3a;-webkit-text-stroke:0.1px #3a3a3a">14</div>
<div class="t" style="left:1px;width:16px;text-align:center;top:368.61px;font-size:9.2px;color:#3a3a3a;-webkit-text-stroke:0.1px #3a3a3a">15</div>
<div class="t" style="left:1px;width:16px;text-align:center;top:382.17px;font-size:9.2px;color:#3a3a3a;-webkit-text-stroke:0.1px #3a3a3a">16</div>
<div class="t" style="left:1px;width:16px;text-align:center;top:395.73px;font-size:9.2px;color:#3a3a3a;-webkit-text-stroke:0.1px #3a3a3a">17</div>
<div class="t" style="left:1px;width:16px;text-align:center;top:409.29px;font-size:9.2px;color:#3a3a3a;-webkit-text-stroke:0.1px #3a3a3a">18</div>
<div class="t" style="left:1px;width:16px;text-align:center;top:422.85px;font-size:9.2px;color:#3a3a3a;-webkit-text-stroke:0.1px #3a3a3a">19</div>
<div class="t" style="left:1px;width:16px;text-align:center;top:436.41px;font-size:9.2px;color:#3a3a3a;-webkit-text-stroke:0.1px #3a3a3a">20</div>
<div class="t" style="left:1px;width:16px;text-align:center;top:449.97px;font-size:9.2px;color:#3a3a3a;-webkit-text-stroke:0.1px #3a3a3a">21</div>
<div class="t" style="left:1px;width:16px;text-align:center;top:463.53px;font-size:9.2px;color:#3a3a3a;-webkit-text-stroke:0.1px #3a3a3a">22</div>
<div class="t" style="left:1px;width:16px;text-align:center;top:477.09px;font-size:9.2px;color:#3a3a3a;-webkit-text-stroke:0.1px #3a3a3a">23</div>
<div class="t" style="left:1px;width:16px;text-align:center;top:490.65px;font-size:9.2px;color:#3a3a3a;-webkit-text-stroke:0.1px #3a3a3a">24</div>
<div class="t" style="left:1px;width:16px;text-align:center;top:504.21px;font-size:9.2px;color:#3a3a3a;-webkit-text-stroke:0.1px #3a3a3a">25</div>
<div class="t" style="left:1px;width:16px;text-align:center;top:517.77px;font-size:9.2px;color:#3a3a3a;-webkit-text-stroke:0.1px #3a3a3a">26</div>
<div class="t" style="left:1px;width:16px;text-align:center;top:531.33px;font-size:9.2px;color:#3a3a3a;-webkit-text-stroke:0.1px #3a3a3a">27</div>
<div style="left:586px;top:175px;width:1px;height:363px;background:#c6c6c6"></div>
<div class="t" style="left:20.10px;top:178.92px;font-size:9.9px;transform:scaleX(0.9593);transform-origin:0 0;color:#111">Value</div>
<div class="t" style="left:63.00px;top:178.92px;font-size:9.9px;transform:scaleX(0.9103);transform-origin:0 0;color:#111">Checked?</div>
<div class="t" style="right:542.51px;top:192.24px;font-size:9.9px;text-align:right;transform:scaleX(0.8468);transform-origin:100% 0;color:#111">182</div>
<div class="t" style="right:542.51px;top:205.8px;font-size:9.9px;text-align:right;transform:scaleX(0.8468);transform-origin:100% 0;color:#111">240</div>
<div class="t" style="right:542.48px;top:219.36px;font-size:9.9px;text-align:right;transform:scaleX(0.8468);transform-origin:100% 0;color:#111">87</div>
<div class="t" style="right:542.51px;top:232.92px;font-size:9.9px;text-align:right;transform:scaleX(0.8468);transform-origin:100% 0;color:#111">203</div>
<div class="t" style="right:542.51px;top:246.48px;font-size:9.9px;text-align:right;transform:scaleX(0.8468);transform-origin:100% 0;color:#111">150</div>
<div class="t" style="right:542.51px;top:260.04px;font-size:9.9px;text-align:right;transform:scaleX(0.8468);transform-origin:100% 0;color:#111">238</div>
<div class="t" style="right:542.51px;top:273.6px;font-size:9.9px;text-align:right;transform:scaleX(0.8468);transform-origin:100% 0;color:#111">179</div>
<div class="t" style="right:542.51px;top:287.16px;font-size:9.9px;text-align:right;transform:scaleX(0.8468);transform-origin:100% 0;color:#111">205</div>
<div class="t" style="right:542.51px;top:300.72px;font-size:9.9px;text-align:right;transform:scaleX(0.8468);transform-origin:100% 0;color:#111">238</div>
<div class="t" style="right:542.48px;top:314.28px;font-size:9.9px;text-align:right;transform:scaleX(0.8468);transform-origin:100% 0;color:#111">79</div>
<div class="t" style="right:542.48px;top:327.84px;font-size:9.9px;text-align:right;transform:scaleX(0.8468);transform-origin:100% 0;color:#111">76</div>
<div class="t" style="right:542.51px;top:341.4px;font-size:9.9px;text-align:right;transform:scaleX(0.8468);transform-origin:100% 0;color:#111">133</div>
<div class="t" style="right:542.48px;top:354.96px;font-size:9.9px;text-align:right;transform:scaleX(0.8468);transform-origin:100% 0;color:#111">85</div>
<div class="t" style="right:542.48px;top:368.52px;font-size:9.9px;text-align:right;transform:scaleX(0.8468);transform-origin:100% 0;color:#111">68</div>
<div class="t" style="right:542.51px;top:382.08px;font-size:9.9px;text-align:right;transform:scaleX(0.8468);transform-origin:100% 0;color:#111">225</div>
<div class="t" style="right:542.51px;top:395.64px;font-size:9.9px;text-align:right;transform:scaleX(0.8468);transform-origin:100% 0;color:#111">170</div>
<div class="t" style="right:542.48px;top:409.2px;font-size:9.9px;text-align:right;transform:scaleX(0.8468);transform-origin:100% 0;color:#111">92</div>
<div class="t" style="right:542.51px;top:422.76px;font-size:9.9px;text-align:right;transform:scaleX(0.8468);transform-origin:100% 0;color:#111">179</div>
<div class="t" style="right:542.51px;top:436.32px;font-size:9.9px;text-align:right;transform:scaleX(0.8468);transform-origin:100% 0;color:#111">149</div>
<div class="t" style="right:542.51px;top:449.88px;font-size:9.9px;text-align:right;transform:scaleX(0.8468);transform-origin:100% 0;color:#111">195</div>
<div class="t" style="right:542.51px;top:463.44px;font-size:9.9px;text-align:right;transform:scaleX(0.8468);transform-origin:100% 0;color:#111">232</div>
<div class="t" style="right:542.51px;top:477.0px;font-size:9.9px;text-align:right;transform:scaleX(0.8468);transform-origin:100% 0;color:#111">170</div>
<div class="t" style="right:542.50px;top:490.56px;font-size:9.9px;text-align:right;transform:scaleX(0.8468);transform-origin:100% 0;color:#111">111</div>
<div class="t" style="right:542.48px;top:504.12px;font-size:9.9px;text-align:right;transform:scaleX(0.8468);transform-origin:100% 0;color:#111">53</div>
<div class="t" style="right:542.48px;top:517.68px;font-size:9.9px;text-align:right;transform:scaleX(0.8468);transform-origin:100% 0;color:#111">85</div>
<div style="left:587px;top:162px;width:14px;height:376px;background:#e6e6e6"></div>
<div style="left:588.8px;top:164.8px;width:10px;height:10px;background:#fff;border:1px solid #c6c6c6"></div>
<svg style="position:absolute;left:591.3px;top:168.5px;" width="5" height="3" viewBox="0 0 5 3"><path d="M0 3L2.5 0L5 3Z" fill="#555"/></svg>
<div style="left:588.8px;top:174.3px;width:10px;height:340px;background:#fff;border:1px solid #c6c6c6;border-top:none"></div>
<div style="left:588.8px;top:529.5px;width:10px;height:9.5px;background:#fff;border:1px solid #c6c6c6"></div>
<svg style="position:absolute;left:591.3px;top:533px;" width="5" height="3" viewBox="0 0 5 3"><path d="M0 0L2.5 3L5 0Z" fill="#555"/></svg>
<div style="left:1px;top:538px;width:600px;height:19px;background:#e6e6e6;border-top:1px solid #c6c6c6"></div>
<svg style="position:absolute;left:19px;top:545px;" width="3" height="5" viewBox="0 0 3 5"><path d="M3 0L0 2.5L3 5Z" fill="#c4c4c4"/></svg>
<svg style="position:absolute;left:38px;top:545px;" width="3" height="5" viewBox="0 0 3 5"><path d="M0 0L3 2.5L0 5Z" fill="#c4c4c4"/></svg>
<div style="left:69px;top:538px;width:43.5px;height:17px;background:#fff;border-left:1px solid #c6c6c6;border-right:1px solid #c6c6c6"></div>
<div style="left:68.5px;top:554px;width:44px;height:1px;background:#217346"></div>
<div class="t" style="left:76.60px;top:543.15px;font-size:8.8px;font-weight:bold;-webkit-text-stroke:0.05px currentColor;transform:scaleX(0.9493);transform-origin:0 0;color:#217346">Sheet1</div>
<svg style="position:absolute;left:134px;top:541px;" width="12" height="12" viewBox="0 0 12 12"><circle cx="6" cy="6" r="5.2" fill="none" stroke="#777" stroke-width="1"/><path d="M6 3V9M3 6H9" stroke="#777" stroke-width="1.2"/></svg>
<svg style="position:absolute;left:361px;top:543px;" width="3" height="9" viewBox="0 0 3 9"><circle cx="1.5" cy="1" r="0.6" fill="#aaa"/><circle cx="1.5" cy="4.5" r="0.6" fill="#aaa"/><circle cx="1.5" cy="8" r="0.6" fill="#aaa"/></svg>
<div style="left:371.5px;top:543px;width:11px;height:11px;background:#fff;border:1px solid #c6c6c6"></div>
<svg style="position:absolute;left:375px;top:546px;" width="3" height="5" viewBox="0 0 3 5"><path d="M3 0L0 2.5L3 5Z" fill="#555"/></svg>
<div style="left:382.5px;top:543px;width:178px;height:11px;background:#fff;border:1px solid #c6c6c6;border-left:none"></div>
<div style="left:577px;top:543px;width:11px;height:11px;background:#fff;border:1px solid #c6c6c6"></div>
<svg style="position:absolute;left:581px;top:546px;" width="3" height="5" viewBox="0 0 3 5"><path d="M0 0L3 2.5L0 5Z" fill="#555"/></svg>
<div style="left:1px;top:557px;width:600px;height:15px;background:#f0f0f0"></div>
<div class="t" style="left:6.40px;top:559.92px;font-size:8.6px;transform:scaleX(0.8409);transform-origin:0 0;color:#555">Ready</div>
<svg style="position:absolute;left:40px;top:560px;" width="10" height="10" viewBox="0 0 10 10"><circle cx="2.5" cy="2.5" r="1.8" fill="#555"/><rect x="0.5" y="4.5" width="8" height="5" fill="none" stroke="#777" stroke-width="0.8"/><path d="M3 4.5V9.5M5.5 4.5V9.5M0.5 7H8.5" stroke="#777" stroke-width="0.8"/><rect x="5" y="1" width="4" height="2" fill="#555"/></svg>
<div style="left:396px;top:557px;width:25.5px;height:15px;background:#d4d4d4"></div>
<svg style="position:absolute;left:404px;top:560px;" width="9" height="9" viewBox="0 0 9 9"><rect x="0.5" y="0.5" width="8" height="8" fill="none" stroke="#666"/><path d="M3.2 0.5V8.5M5.8 0.5V8.5M0.5 3.2H8.5M0.5 5.8H8.5" stroke="#666"/></svg>
<svg style="position:absolute;left:430px;top:560px;" width="9" height="9" viewBox="0 0 9 9"><rect x="0.5" y="0.5" width="8" height="8" fill="none" stroke="#777"/><path d="M2.5 0.5V8.5M6.5 0.5V8.5" stroke="#777"/></svg>
<svg style="position:absolute;left:451px;top:560px;" width="9" height="9" viewBox="0 0 9 9"><path d="M0.5 0.5V8.5H8.5V0.5M3 0.5V4.5H6V0.5" fill="none" stroke="#666"/></svg>
<div style="left:476px;top:564px;width:5px;height:1.2px;background:#444"></div>
<div style="left:484px;top:564.5px;width:67px;height:0.8px;background:#aaa"></div>
<div style="left:516px;top:561px;width:2.5px;height:7px;background:#555"></div>
<svg style="position:absolute;left:553px;top:561px;" width="7" height="7" viewBox="0 0 7 7"><path d="M3.5 0V7M0 3.5H7" stroke="#444" stroke-width="1.2"/></svg>
<div class="t" style="left:570.00px;top:560.47px;font-size:8.3px;transform:scaleX(0.9413);transform-origin:0 0;color:#444">100%</div>
<div style="left:338px;top:62px;width:124px;height:202px;background:#fff;border:1px solid #c6c6c6;border-top:none;box-shadow:1px 1px 2px rgba(0,0,0,0.18)"></div>
<div style="left:338px;top:43px;width:109px;height:20.5px;background:#c9c9c9;border:2px solid #d24a43"></div>
<svg style="position:absolute;left:340.5px;top:46.5px;" width="12" height="12" viewBox="0 0 12 12"><rect x="0" y="1" width="2.5" height="2.2" fill="#e04b2a"/><rect x="0" y="4.2" width="2.5" height="2.2" fill="#3a78b8"/><rect x="0" y="7.4" width="2.5" height="2.2" fill="#e04b2a"/><path d="M2.5 0.5H9.5V4.5M2.5 3.5H9.5M6 0.5V4" fill="none" stroke="#999" stroke-width="0.8"/><rect x="4" y="5" width="7.5" height="6.5" rx="0.8" fill="#fff" stroke="#777" stroke-width="0.9"/><path d="M6.3 9.6L9 7.2M7 7H9.2V9" fill="none" stroke="#333" stroke-width="0.9"/></svg>
<div class="t" style="left:352.70px;top:49.35px;font-size:8.8px;transform:scaleX(0.9376);transform-origin:0 0;color:#333">Conditional Formatting</div>
<svg style="position:absolute;left:438px;top:52px;" width="4" height="2.5" viewBox="0 0 4 2.5"><path d="M0 0H4L2 2.4Z" fill="#444"/></svg>
<svg style="position:absolute;left:344px;top:68px;" width="21" height="21" viewBox="0 0 21 21"><g stroke="#ababab" stroke-width="1" fill="none"><rect x="0.5" y="0.5" width="19" height="16.5"/><path d="M0.5 4.5H19.5M0.5 8.5H19.5M0.5 12.5H19.5M5.5 0.5V17M14.5 0.5V17"/></g><rect x="5.5" y="4.5" width="9" height="4" fill="#f0c46c"/><rect x="10.5" y="11.5" width="10" height="9" fill="#fff" stroke="#777"/><path d="M14.5 13L12.5 14.5L14.5 16M16 15.5L18 17L16 18.5" stroke="#333" fill="none" stroke-width="0.8"/></svg>
<div class="t" style="left:369.50px;top:73.74px;font-size:8.7px;font-weight:bold;-webkit-text-stroke:0.05px currentColor;transform:scaleX(0.8678);transform-origin:0 0;color:#444"><u>H</u>ighlight Cells Rules</div>
<svg style="position:absolute;left:451.5px;top:74px;" width="3" height="6" viewBox="0 0 3 6"><path d="M0 0L3 3L0 6Z" fill="#555"/></svg>
<svg style="position:absolute;left:344px;top:98px;" width="21" height="21" viewBox="0 0 21 21"><g stroke="#ababab" stroke-width="1" fill="none"><rect x="0.5" y="0.5" width="19" height="16.5"/><path d="M0.5 4.5H19.5M0.5 8.5H19.5M0.5 12.5H19.5M5.5 0.5V17M14.5 0.5V17"/></g><rect x="5.5" y="0.5" width="9" height="16.5" fill="#f0c46c" stroke="#ababab"/><path d="M10 2.5V11M7.5 5L10 2.5L12.5 5" stroke="#333" fill="none" stroke-width="0.9"/><rect x="10.5" y="11.5" width="10" height="9" fill="#fff" stroke="#777"/><text x="11.3" y="19" font-size="6.5" font-family="Liberation Sans" fill="#333">10</text></svg>
<div class="t" style="left:369.50px;top:103.34px;font-size:8.7px;font-weight:bold;-webkit-text-stroke:0.05px currentColor;transform:scaleX(0.9306);transform-origin:0 0;color:#444"><u>T</u>op/Bottom Rules</div>
<svg style="position:absolute;left:451.5px;top:104px;" width="3" height="6" viewBox="0 0 3 6"><path d="M0 0L3 3L0 6Z" fill="#555"/></svg>
<div style="left:368px;top:122px;width:93px;height:1px;background:#e1e1e1"></div>
<svg style="position:absolute;left:344px;top:129px;" width="20" height="19" viewBox="0 0 20 19"><rect x="4.5" y="0.5" width="9" height="3.4" fill="#3a6fb0"/><rect x="4.5" y="3.9" width="3" height="3.4" fill="#3a6fb0"/><rect x="4.5" y="7.3" width="6" height="3.4" fill="#3a6fb0"/><rect x="4.5" y="10.7" width="4" height="3.4" fill="#3a6fb0"/><rect x="4.5" y="14.1" width="7" height="3.4" fill="#3a6fb0"/><g stroke="#ababab" stroke-width="1" fill="none"><rect x="0.5" y="0.5" width="19" height="17"/><path d="M0.5 3.9H19.5M0.5 7.3H19.5M0.5 10.7H19.5M0.5 14.1H19.5M4.5 0.5V17.5M15.5 0.5V17.5"/></g></svg>
<div class="t" style="left:369.50px;top:134.34px;font-size:8.7px;font-weight:bold;-webkit-text-stroke:0.05px currentColor;transform:scaleX(0.8738);transform-origin:0 0;color:#444"><u>D</u>ata Bars</div>
<svg style="position:absolute;left:451.5px;top:135px;" width="3" height="6" viewBox="0 0 3 6"><path d="M0 0L3 3L0 6Z" fill="#555"/></svg>
<svg style="position:absolute;left:344px;top:159px;" width="20" height="19" viewBox="0 0 20 19"><rect x="4.5" y="0.5" width="11" height="3.4" fill="#3a6fb0"/><rect x="4.5" y="3.9" width="11" height="3.4" fill="#6aa37a"/><rect x="4.5" y="7.3" width="11" height="3.4" fill="#f0c46c"/><rect x="4.5" y="10.7" width="11" height="3.4" fill="#e88a3a"/><rect x="4.5" y="14.1" width="11" height="3.4" fill="#d9502c"/><g stroke="#ababab" stroke-width="1" fill="none"><rect x="0.5" y="0.5" width="19" height="17"/><path d="M0.5 3.9H19.5M0.5 7.3H19.5M0.5 10.7H19.5M0.5 14.1H19.5M4.5 0.5V17.5M15.5 0.5V17.5"/></g></svg>
<div class="t" style="left:369.50px;top:163.94px;font-size:8.7px;font-weight:bold;-webkit-text-stroke:0.05px currentColor;transform:scaleX(0.8403);transform-origin:0 0;color:#444">Color <u>S</u>cales</div>
<svg style="position:absolute;left:451.5px;top:165px;" width="3" height="6" viewBox="0 0 3 6"><path d="M0 0L3 3L0 6Z" fill="#555"/></svg>
<div style="left:338px;top:181.5px;width:124px;height:33.5px;background:#c6c6c6;border:2px solid #d24a43"></div>
<svg style="position:absolute;left:344px;top:188.5px;" width="20" height="19" viewBox="0 0 20 19"><rect x="0.5" y="0.5" width="19" height="17" fill="#fff"/><circle cx="6.5" cy="2.2" r="0.9" fill="#3f9a7a"/><circle cx="6.5" cy="5.6" r="0.9" fill="#e04b2a"/><circle cx="6.5" cy="9" r="0.9" fill="#3f9a7a"/><circle cx="6.5" cy="12.4" r="0.9" fill="#e04b2a"/><circle cx="6.5" cy="15.8" r="0.9" fill="#3f9a7a"/><path d="M8.5 2.2H13M8.5 5.6H13M8.5 9H13M8.5 12.4H13M8.5 15.8H13" stroke="#777" stroke-width="0.8"/><g stroke="#ababab" stroke-width="1" fill="none"><rect x="0.5" y="0.5" width="19" height="17"/><path d="M0.5 3.9H19.5M0.5 7.3H19.5M0.5 10.7H19.5M0.5 14.1H19.5M4.5 0.5V17.5M15.5 0.5V17.5"/></g></svg>
<div class="t" style="left:369.50px;top:194.34px;font-size:8.7px;font-weight:bold;-webkit-text-stroke:0.05px currentColor;transform:scaleX(0.8921);transform-origin:0 0;color:#444"><u>I</u>con Sets</div>
<svg style="position:absolute;left:451.5px;top:195px;" width="3" height="6" viewBox="0 0 3 6"><path d="M0 0L3 3L0 6Z" fill="#555"/></svg>
<svg style="position:absolute;left:341.5px;top:216.5px;" width="12" height="12" viewBox="0 0 12 12"><rect x="1" y="0.8" width="9" height="9.4" rx="1" fill="#fff" stroke="#808080" stroke-width="0.9"/><path d="M4 3.2V10M7 3.2V10M1 6.5H10" stroke="#b0b0b0" stroke-width="0.6"/><rect x="3.6" y="2.4" width="3.8" height="2.4" fill="#efcf7a"/></svg>
<div class="t" style="left:360.20px;top:218.64px;font-size:8.7px;transform:scaleX(0.8849);transform-origin:0 0;color:#555"><u>N</u>ew Rule...</div>
<svg style="position:absolute;left:341.5px;top:233px;" width="12" height="12" viewBox="0 0 12 12"><rect x="1" y="0.8" width="9" height="9.4" rx="1" fill="#fff" stroke="#808080" stroke-width="0.9"/><path d="M4 3.2V10M7 3.2V10M1 6.5H10" stroke="#b0b0b0" stroke-width="0.6"/><rect x="3.6" y="2.4" width="3.8" height="2.4" fill="#efcf7a"/><path d="M5.6 10.6L9.6 6.6L11.6 8.6L7.6 12Z" fill="#e8798a"/></svg>
<div class="t" style="left:360.20px;top:234.44px;font-size:8.7px;transform:scaleX(0.8535);transform-origin:0 0;color:#555"><u>C</u>lear Rules</div>
<svg style="position:absolute;left:451.5px;top:235px;" width="3" height="6" viewBox="0 0 3 6"><path d="M0 0L3 3L0 6Z" fill="#555"/></svg>
<svg style="position:absolute;left:341.5px;top:249px;" width="12" height="12" viewBox="0 0 12 12"><rect x="0.3" y="0.3" width="9.5" height="9.8" rx="1" fill="#ddd" stroke="#8a8a8a" stroke-width="0.8"/><rect x="1" y="0.8" width="9" height="9.4" rx="1" fill="#fff" stroke="#808080" stroke-width="0.9"/><path d="M4 3.2V10M7 3.2V10M1 6.5H10" stroke="#b0b0b0" stroke-width="0.6"/><rect x="3.6" y="2.4" width="3.8" height="2.4" fill="#efcf7a"/></svg>
<div class="t" style="left:360.20px;top:250.84px;font-size:8.7px;transform:scaleX(0.8858);transform-origin:0 0;color:#555">Manage <u>R</u>ules...</div>
<div style="left:165px;top:183px;width:173px;height:291px;background:#fff;border:1px solid #c6c6c6;box-shadow:1px 1px 2px rgba(0,0,0,0.15)"></div>
<div style="left:166px;top:184.4px;width:171px;height:14.0px;background:#e9e9e9"></div>
<div class="t" style="left:173.30px;top:187.25px;font-size:8.8px;font-weight:bold;-webkit-text-stroke:0.05px currentColor;transform:scaleX(0.8946);transform-origin:0 0;color:#505050">Directional</div>
<div style="left:166px;top:269.9px;width:171px;height:14.300000000000011px;background:#e9e9e9"></div>
<div class="t" style="left:173.30px;top:272.95px;font-size:8.8px;font-weight:bold;-webkit-text-stroke:0.05px currentColor;transform:scaleX(0.8279);transform-origin:0 0;color:#505050">Shapes</div>
<div style="left:166px;top:337.9px;width:171px;height:14.200000000000045px;background:#e9e9e9"></div>
<div class="t" style="left:173.30px;top:340.65px;font-size:8.8px;font-weight:bold;-webkit-text-stroke:0.05px currentColor;transform:scaleX(0.8749);transform-origin:0 0;color:#505050">Indicators</div>
<div style="left:166px;top:387.9px;width:171px;height:14.200000000000045px;background:#e9e9e9"></div>
<div class="t" style="left:173.30px;top:390.65px;font-size:8.8px;font-weight:bold;-webkit-text-stroke:0.05px currentColor;transform:scaleX(0.8527);transform-origin:0 0;color:#505050">Ratings</div>
<div style="left:166px;top:455px;width:171px;height:1px;background:#e1e1e1"></div>
<div class="t" style="left:187.90px;top:460.55px;font-size:8.8px;transform:scaleX(0.8754);transform-origin:0 0;color:#555"><u>M</u>ore Rules...</div>
<svg style="position:absolute;left:165px;top:183px;" width="173" height="291" viewBox="0 0 173 291"><g transform="translate(5.5,18.69999999999999)"><path d="M6.5 0.6L12 6.1V8.9L8 5.1V12.4H5V5.1L1 8.9V6.1Z" fill="#5aa88f" stroke="#3f8069" stroke-width="0.8" stroke-linejoin="miter" transform="rotate(0 6.5 6.5)"/></g><g transform="translate(22.0,18.69999999999999)"><path d="M6.5 0.6L12 6.1V8.9L8 5.1V12.4H5V5.1L1 8.9V6.1Z" fill="#f1c577" stroke="#b8893c" stroke-width="0.8" stroke-linejoin="miter" transform="rotate(90 6.5 6.5)"/></g><g transform="translate(38.30000000000001,18.69999999999999)"><path d="M6.5 0.6L12 6.1V8.9L8 5.1V12.4H5V5.1L1 8.9V6.1Z" fill="#e2552f" stroke="#b5401f" stroke-width="0.8" stroke-linejoin="miter" transform="rotate(180 6.5 6.5)"/></g><g transform="translate(5.5,36.099999999999994)"><path d="M6.5 3L12.3 10.3H0.7Z" fill="#5aa88f" stroke="#3f8069" stroke-width="0.7"/></g><g transform="translate(22.0,36.099999999999994)"><rect x="0.5" y="4.5" width="12" height="4" fill="#f1c577" stroke="#b8893c" stroke-width="0.7"/></g><g transform="translate(38.30000000000001,36.099999999999994)"><path d="M6.5 10.3L12.3 3H0.7Z" fill="#e2552f" stroke="#b5401f" stroke-width="0.7"/></g><g transform="translate(5.5,53.5)"><path d="M6.5 0.6L12 6.1V8.9L8 5.1V12.4H5V5.1L1 8.9V6.1Z" fill="#5aa88f" stroke="#3f8069" stroke-width="0.8" stroke-linejoin="miter" transform="rotate(0 6.5 6.5)"/></g><g transform="translate(22.0,53.5)"><path d="M6.5 0.6L12 6.1V8.9L8 5.1V12.4H5V5.1L1 8.9V6.1Z" fill="#f1c577" stroke="#b8893c" stroke-width="0.8" stroke-linejoin="miter" transform="rotate(45 6.5 6.5)"/></g><g transform="translate(38.30000000000001,53.5)"><path d="M6.5 0.6L12 6.1V8.9L8 5.1V12.4H5V5.1L1 8.9V6.1Z" fill="#f1c577" stroke="#b8893c" stroke-width="0.8" stroke-linejoin="miter" transform="rotate(135 6.5 6.5)"/></g><g transform="translate(54.599999999999994,53.5)"><path d="M6.5 0.6L12 6.1V8.9L8 5.1V12.4H5V5.1L1 8.9V6.1Z" fill="#e2552f" stroke="#b5401f" stroke-width="0.8" stroke-linejoin="miter" transform="rotate(180 6.5 6.5)"/></g><g transform="translate(5.5,71.0)"><path d="M6.5 0.6L12 6.1V8.9L8 5.1V12.4H5V5.1L1 8.9V6.1Z" fill="#5aa88f" stroke="#3f8069" stroke-width="0.8" stroke-linejoin="miter" transform="rotate(0 6.5 6.5)"/></g><g transform="translate(22.0,71.0)"><path d="M6.5 0.6L12 6.1V8.9L8 5.1V12.4H5V5.1L1 8.9V6.1Z" fill="#f1c577" stroke="#b8893c" stroke-width="0.8" stroke-linejoin="miter" transform="rotate(45 6.5 6.5)"/></g><g transform="translate(38.30000000000001,71.0)"><path d="M6.5 0.6L12 6.1V8.9L8 5.1V12.4H5V5.1L1 8.9V6.1Z" fill="#f1c577" stroke="#b8893c" stroke-width="0.8" stroke-linejoin="miter" transform="rotate(90 6.5 6.5)"/></g><g transform="translate(54.599999999999994,71.0)"><path d="M6.5 0.6L12 6.1V8.9L8 5.1V12.4H5V5.1L1 8.9V6.1Z" fill="#f1c577" stroke="#b8893c" stroke-width="0.8" stroke-linejoin="miter" transform="rotate(135 6.5 6.5)"/></g><g transform="translate(70.9,71.0)"><path d="M6.5 0.6L12 6.1V8.9L8 5.1V12.4H5V5.1L1 8.9V6.1Z" fill="#e2552f" stroke="#b5401f" stroke-width="0.8" stroke-linejoin="miter" transform="rotate(180 6.5 6.5)"/></g><g transform="translate(90.5,18.69999999999999)"><path d="M6.5 0.6L12 6.1V8.9L8 5.1V12.4H5V5.1L1 8.9V6.1Z" fill="#7b7b7b" stroke="#6a6a6a" stroke-width="0.8" stroke-linejoin="miter" transform="rotate(0 6.5 6.5)"/></g><g transform="translate(106.80000000000001,18.69999999999999)"><path d="M6.5 0.6L12 6.1V8.9L8 5.1V12.4H5V5.1L1 8.9V6.1Z" fill="#7b7b7b" stroke="#6a6a6a" stroke-width="0.8" stroke-linejoin="miter" transform="rotate(90 6.5 6.5)"/></g><g transform="translate(123.10000000000002,18.69999999999999)"><path d="M6.5 0.6L12 6.1V8.9L8 5.1V12.4H5V5.1L1 8.9V6.1Z" fill="#7b7b7b" stroke="#6a6a6a" stroke-width="0.8" stroke-linejoin="miter" transform="rotate(180 6.5 6.5)"/></g><g transform="translate(90.5,36.099999999999994)"><path d="M6.5 0.6L12 6.1V8.9L8 5.1V12.4H5V5.1L1 8.9V6.1Z" fill="#7b7b7b" stroke="#6a6a6a" stroke-width="0.8" stroke-linejoin="miter" transform="rotate(0 6.5 6.5)"/></g><g transform="translate(106.80000000000001,36.099999999999994)"><path d="M6.5 0.6L12 6.1V8.9L8 5.1V12.4H5V5.1L1 8.9V6.1Z" fill="#7b7b7b" stroke="#6a6a6a" stroke-width="0.8" stroke-linejoin="miter" transform="rotate(45 6.5 6.5)"/></g><g transform="translate(123.10000000000002,36.099999999999994)"><path d="M6.5 0.6L12 6.1V8.9L8 5.1V12.4H5V5.1L1 8.9V6.1Z" fill="#7b7b7b" stroke="#6a6a6a" stroke-width="0.8" stroke-linejoin="miter" transform="rotate(135 6.5 6.5)"/></g><g transform="translate(139.39999999999998,36.099999999999994)"><path d="M6.5 0.6L12 6.1V8.9L8 5.1V12.4H5V5.1L1 8.9V6.1Z" fill="#7b7b7b" stroke="#6a6a6a" stroke-width="0.8" stroke-linejoin="miter" transform="rotate(180 6.5 6.5)"/></g><g transform="translate(90.5,53.5)"><path d="M6.5 0.6L12 6.1V8.9L8 5.1V12.4H5V5.1L1 8.9V6.1Z" fill="#7b7b7b" stroke="#6a6a6a" stroke-width="0.8" stroke-linejoin="miter" transform="rotate(0 6.5 6.5)"/></g><g transform="translate(106.80000000000001,53.5)"><path d="M6.5 0.6L12 6.1V8.9L8 5.1V12.4H5V5.1L1 8.9V6.1Z" fill="#7b7b7b" stroke="#6a6a6a" stroke-width="0.8" stroke-linejoin="miter" transform="rotate(45 6.5 6.5)"/></g><g transform="translate(123.10000000000002,53.5)"><path d="M6.5 0.6L12 6.1V8.9L8 5.1V12.4H5V5.1L1 8.9V6.1Z" fill="#7b7b7b" stroke="#6a6a6a" stroke-width="0.8" stroke-linejoin="miter" transform="rotate(90 6.5 6.5)"/></g><g transform="translate(139.39999999999998,53.5)"><path d="M6.5 0.6L12 6.1V8.9L8 5.1V12.4H5V5.1L1 8.9V6.1Z" fill="#7b7b7b" stroke="#6a6a6a" stroke-width="0.8" stroke-linejoin="miter" transform="rotate(135 6.5 6.5)"/></g><g transform="translate(155.7,53.5)"><path d="M6.5 0.6L12 6.1V8.9L8 5.1V12.4H5V5.1L1 8.9V6.1Z" fill="#7b7b7b" stroke="#6a6a6a" stroke-width="0.8" stroke-linejoin="miter" transform="rotate(180 6.5 6.5)"/></g><g transform="translate(5.5,103.80000000000001)"><circle cx="6.5" cy="6.5" r="6" fill="#5aa88f" stroke="#3f8069" stroke-width="0.7"/></g><g transform="translate(22.0,103.80000000000001)"><circle cx="6.5" cy="6.5" r="6" fill="#f1c577" stroke="#b8893c" stroke-width="0.7"/></g><g transform="translate(38.30000000000001,103.80000000000001)"><circle cx="6.5" cy="6.5" r="6" fill="#e2552f" stroke="#b5401f" stroke-width="0.7"/></g><g transform="translate(5.5,121.69999999999999)"><circle cx="6.5" cy="6.5" r="6" fill="#5aa88f" stroke="#3f8069" stroke-width="0.7"/></g><g transform="translate(22.0,121.69999999999999)"><path d="M6.5 0.8L12.3 11.8H0.7Z" fill="#f1c577" stroke="#b8893c" stroke-width="0.7"/></g><g transform="translate(38.30000000000001,121.69999999999999)"><path d="M6.5 0.6L12.4 6.5L6.5 12.4L0.6 6.5Z" fill="#e2552f" stroke="#b5401f" stroke-width="0.7"/></g><g transform="translate(5.5,139.2)"><circle cx="6.5" cy="6.5" r="6" fill="#e2552f" stroke="#b5401f" stroke-width="0.7"/></g><g transform="translate(22.0,139.2)"><circle cx="6.5" cy="6.5" r="6" fill="#f0aaa0" stroke="#c88a80" stroke-width="0.7"/></g><g transform="translate(38.30000000000001,139.2)"><circle cx="6.5" cy="6.5" r="6" fill="#adadad" stroke="#8a8a8a" stroke-width="0.7"/></g><g transform="translate(54.599999999999994,139.2)"><circle cx="6.5" cy="6.5" r="6" fill="#4a4a4a" stroke="#3a3a3a" stroke-width="0.7"/></g><g transform="translate(90.5,103.80000000000001)"><rect x="0.5" y="0.5" width="12" height="12" rx="1.5" fill="#454545"/><circle cx="6.5" cy="6.5" r="4" fill="#5aa88f" stroke="#3f8069" stroke-width="0.5"/></g><g transform="translate(106.80000000000001,103.80000000000001)"><rect x="0.5" y="0.5" width="12" height="12" rx="1.5" fill="#454545"/><circle cx="6.5" cy="6.5" r="4" fill="#f1c577" stroke="#b8893c" stroke-width="0.5"/></g><g transform="translate(123.10000000000002,103.80000000000001)"><rect x="0.5" y="0.5" width="12" height="12" rx="1.5" fill="#454545"/><circle cx="6.5" cy="6.5" r="4" fill="#e2552f" stroke="#b5401f" stroke-width="0.5"/></g><g transform="translate(90.5,121.69999999999999)"><circle cx="6.5" cy="6.5" r="6" fill="#5aa88f" stroke="#3f8069" stroke-width="0.7"/></g><g transform="translate(106.80000000000001,121.69999999999999)"><circle cx="6.5" cy="6.5" r="6" fill="#f1c577" stroke="#b8893c" stroke-width="0.7"/></g><g transform="translate(123.10000000000002,121.69999999999999)"><circle cx="6.5" cy="6.5" r="6" fill="#e2552f" stroke="#b5401f" stroke-width="0.7"/></g><g transform="translate(139.39999999999998,121.69999999999999)"><circle cx="6.5" cy="6.5" r="6" fill="#4a4a4a" stroke="#3a3a3a" stroke-width="0.7"/></g><g transform="translate(5.5,171.8)"><circle cx="6.5" cy="6.5" r="6" fill="#5aa88f" stroke="#3f8069" stroke-width="0.7"/><path d="M3.5 6.8L5.7 9L9.6 4.3" stroke="#fff" stroke-width="1.5" fill="none"/></g><g transform="translate(22.0,171.8)"><circle cx="6.5" cy="6.5" r="6" fill="#f1c577" stroke="#b8893c" stroke-width="0.7"/><path d="M6.5 3V7.5" stroke="#fff" stroke-width="1.6"/><circle cx="6.5" cy="9.6" r="0.9" fill="#fff"/></g><g transform="translate(38.30000000000001,171.8)"><circle cx="6.5" cy="6.5" r="6" fill="#e2552f" stroke="#b5401f" stroke-width="0.7"/><path d="M4.2 4.2L8.8 8.8M8.8 4.2L4.2 8.8" stroke="#fff" stroke-width="1.5"/></g><g transform="translate(5.5,188.0)"><path d="M3 1V13" stroke="#6a6a6a" stroke-width="1.3"/><path d="M3.6 1.2L10.2 4.6L3.6 8Z" fill="#5aa88f" stroke="#3f8069" stroke-width="0.5"/></g><g transform="translate(22.0,188.0)"><path d="M3 1V13" stroke="#6a6a6a" stroke-width="1.3"/><path d="M3.6 1.2L10.2 4.6L3.6 8Z" fill="#f1c577" stroke="#b8893c" stroke-width="0.5"/></g><g transform="translate(38.30000000000001,188.0)"><path d="M3 1V13" stroke="#6a6a6a" stroke-width="1.3"/><path d="M3.6 1.2L10.2 4.6L3.6 8Z" fill="#e2552f" stroke="#b5401f" stroke-width="0.5"/></g><g transform="translate(5.5,222.3)"><defs><clipPath id="hc"><rect x="0" y="0" width="6.5" height="13"/></clipPath></defs><path d="M6.5 0.6L8.3 4.6L12.5 5L9.3 7.9L10.3 12.2L6.5 10L2.7 12.2L3.7 7.9L0.5 5L4.7 4.6Z" fill="#f1c577" stroke="#b8893c" stroke-width="0.7"/><path d="M6.5 0.6L8.3 4.6L12.5 5L9.3 7.9L10.3 12.2L6.5 10L2.7 12.2L3.7 7.9L0.5 5L4.7 4.6Z" fill="#f1c577" clip-path="url(#hc)"/><path d="M6.5 0.6L8.3 4.6L12.5 5L9.3 7.9L10.3 12.2L6.5 10L2.7 12.2L3.7 7.9L0.5 5L4.7 4.6Z" fill="none" stroke="#b8893c" stroke-width="0.7"/></g><g transform="translate(22.0,222.3)"><defs><clipPath id="hc"><rect x="0" y="0" width="6.5" height="13"/></clipPath></defs><path d="M6.5 0.6L8.3 4.6L12.5 5L9.3 7.9L10.3 12.2L6.5 10L2.7 12.2L3.7 7.9L0.5 5L4.7 4.6Z" fill="#fff" stroke="#a08a60" stroke-width="0.7"/><path d="M6.5 0.6L8.3 4.6L12.5 5L9.3 7.9L10.3 12.2L6.5 10L2.7 12.2L3.7 7.9L0.5 5L4.7 4.6Z" fill="#f1c577" clip-path="url(#hc)"/><path d="M6.5 0.6L8.3 4.6L12.5 5L9.3 7.9L10.3 12.2L6.5 10L2.7 12.2L3.7 7.9L0.5 5L4.7 4.6Z" fill="none" stroke="#a08a60" stroke-width="0.7"/></g><g transform="translate(38.30000000000001,222.3)"><defs><clipPath id="hc"><rect x="0" y="0" width="6.5" height="13"/></clipPath></defs><path d="M6.5 0.6L8.3 4.6L12.5 5L9.3 7.9L10.3 12.2L6.5 10L2.7 12.2L3.7 7.9L0.5 5L4.7 4.6Z" fill="#fff" stroke="#888" stroke-width="0.7"/><path d="M6.5 0.6L8.3 4.6L12.5 5L9.3 7.9L10.3 12.2L6.5 10L2.7 12.2L3.7 7.9L0.5 5L4.7 4.6Z" fill="#fff" clip-path="url(#hc)"/><path d="M6.5 0.6L8.3 4.6L12.5 5L9.3 7.9L10.3 12.2L6.5 10L2.7 12.2L3.7 7.9L0.5 5L4.7 4.6Z" fill="none" stroke="#888" stroke-width="0.7"/></g><g transform="translate(5.5,239.39999999999998)"><circle cx="6.5" cy="6.5" r="6" fill="#484848" stroke="#484848" stroke-width="0.9"/></g><g transform="translate(22.0,239.39999999999998)"><circle cx="6.5" cy="6.5" r="6" fill="#fff" stroke="#484848" stroke-width="0.9"/><path d="M6.5 6.5V0.5A6 6 0 1 1 0.5 6.5Z" fill="#484848"/></g><g transform="translate(38.30000000000001,239.39999999999998)"><circle cx="6.5" cy="6.5" r="6" fill="#fff" stroke="#484848" stroke-width="0.9"/><path d="M6.5 0.5A6 6 0 0 0 6.5 12.5Z" fill="#484848"/></g><g transform="translate(54.599999999999994,239.39999999999998)"><circle cx="6.5" cy="6.5" r="6" fill="#fff" stroke="#484848" stroke-width="0.9"/><path d="M6.5 6.5V0.5A6 6 0 0 1 12.5 6.5Z" fill="#484848"/></g><g transform="translate(70.9,239.39999999999998)"><circle cx="6.5" cy="6.5" r="6" fill="#fff" stroke="#484848" stroke-width="0.9"/></g><g transform="translate(5.5,256.7)"><rect x="0" y="0" width="13" height="13" fill="#7a7a7a"/><rect x="0.5" y="0.5" width="5.75" height="5.75" fill="#3d78bd"/><rect x="6.75" y="0.5" width="5.75" height="5.75" fill="#3d78bd"/><rect x="0.5" y="6.75" width="5.75" height="5.75" fill="#3d78bd"/><rect x="6.75" y="6.75" width="5.75" height="5.75" fill="#3d78bd"/></g><g transform="translate(22.0,256.7)"><rect x="0" y="0" width="13" height="13" fill="#7a7a7a"/><rect x="0.5" y="0.5" width="5.75" height="5.75" fill="#3d78bd"/><rect x="6.75" y="0.5" width="5.75" height="5.75" fill="#b0b0b0"/><rect x="0.5" y="6.75" width="5.75" height="5.75" fill="#3d78bd"/><rect x="6.75" y="6.75" width="5.75" height="5.75" fill="#3d78bd"/></g><g transform="translate(38.30000000000001,256.7)"><rect x="0" y="0" width="13" height="13" fill="#7a7a7a"/><rect x="0.5" y="0.5" width="5.75" height="5.75" fill="#b0b0b0"/><rect x="6.75" y="0.5" width="5.75" height="5.75" fill="#b0b0b0"/><rect x="0.5" y="6.75" width="5.75" height="5.75" fill="#3d78bd"/><rect x="6.75" y="6.75" width="5.75" height="5.75" fill="#3d78bd"/></g><g transform="translate(54.599999999999994,256.7)"><rect x="0" y="0" width="13" height="13" fill="#7a7a7a"/><rect x="0.5" y="0.5" width="5.75" height="5.75" fill="#b0b0b0"/><rect x="6.75" y="0.5" width="5.75" height="5.75" fill="#b0b0b0"/><rect x="0.5" y="6.75" width="5.75" height="5.75" fill="#3d78bd"/><rect x="6.75" y="6.75" width="5.75" height="5.75" fill="#b0b0b0"/></g><g transform="translate(70.9,256.7)"><rect x="0" y="0" width="13" height="13" fill="#7a7a7a"/><rect x="0.5" y="0.5" width="5.75" height="5.75" fill="#b0b0b0"/><rect x="6.75" y="0.5" width="5.75" height="5.75" fill="#b0b0b0"/><rect x="0.5" y="6.75" width="5.75" height="5.75" fill="#b0b0b0"/><rect x="6.75" y="6.75" width="5.75" height="5.75" fill="#b0b0b0"/></g><g transform="translate(90.5,222.0)"><rect x="0.5" y="9.5" width="2.6" height="3" fill="#3d78bd" stroke="#2a5a95" stroke-width="0.5"/><rect x="3.5" y="7.0" width="2.6" height="5.5" fill="#b8b8b8" stroke="#7d7d7d" stroke-width="0.5"/><rect x="6.5" y="4.0" width="2.6" height="8.5" fill="#b8b8b8" stroke="#7d7d7d" stroke-width="0.5"/><rect x="9.5" y="1.0" width="2.6" height="11.5" fill="#b8b8b8" stroke="#7d7d7d" stroke-width="0.5"/></g><g transform="translate(106.80000000000001,222.0)"><rect x="0.5" y="9.5" width="2.6" height="3" fill="#3d78bd" stroke="#2a5a95" stroke-width="0.5"/><rect x="3.5" y="7.0" width="2.6" height="5.5" fill="#3d78bd" stroke="#2a5a95" stroke-width="0.5"/><rect x="6.5" y="4.0" width="2.6" height="8.5" fill="#b8b8b8" stroke="#7d7d7d" stroke-width="0.5"/><rect x="9.5" y="1.0" width="2.6" height="11.5" fill="#b8b8b8" stroke="#7d7d7d" stroke-width="0.5"/></g><g transform="translate(123.10000000000002,222.0)"><rect x="0.5" y="9.5" width="2.6" height="3" fill="#3d78bd" stroke="#2a5a95" stroke-width="0.5"/><rect x="3.5" y="7.0" width="2.6" height="5.5" fill="#3d78bd" stroke="#2a5a95" stroke-width="0.5"/><rect x="6.5" y="4.0" width="2.6" height="8.5" fill="#3d78bd" stroke="#2a5a95" stroke-width="0.5"/><rect x="9.5" y="1.0" width="2.6" height="11.5" fill="#b8b8b8" stroke="#7d7d7d" stroke-width="0.5"/></g><g transform="translate(139.39999999999998,222.0)"><rect x="0.5" y="9.5" width="2.6" height="3" fill="#3d78bd" stroke="#2a5a95" stroke-width="0.5"/><rect x="3.5" y="7.0" width="2.6" height="5.5" fill="#3d78bd" stroke="#2a5a95" stroke-width="0.5"/><rect x="6.5" y="4.0" width="2.6" height="8.5" fill="#3d78bd" stroke="#2a5a95" stroke-width="0.5"/><rect x="9.5" y="1.0" width="2.6" height="11.5" fill="#3d78bd" stroke="#2a5a95" stroke-width="0.5"/></g><g transform="translate(90.5,239.5)"><rect x="0.5" y="9.5" width="2.6" height="3" fill="#b8b8b8" stroke="#7d7d7d" stroke-width="0.5"/><rect x="3.5" y="7.0" width="2.6" height="5.5" fill="#b8b8b8" stroke="#7d7d7d" stroke-width="0.5"/><rect x="6.5" y="4.0" width="2.6" height="8.5" fill="#b8b8b8" stroke="#7d7d7d" stroke-width="0.5"/><rect x="9.5" y="1.0" width="2.6" height="11.5" fill="#b8b8b8" stroke="#7d7d7d" stroke-width="0.5"/></g><g transform="translate(106.80000000000001,239.5)"><rect x="0.5" y="9.5" width="2.6" height="3" fill="#3d78bd" stroke="#2a5a95" stroke-width="0.5"/><rect x="3.5" y="7.0" width="2.6" height="5.5" fill="#b8b8b8" stroke="#7d7d7d" stroke-width="0.5"/><rect x="6.5" y="4.0" width="2.6" height="8.5" fill="#b8b8b8" stroke="#7d7d7d" stroke-width="0.5"/><rect x="9.5" y="1.0" width="2.6" height="11.5" fill="#b8b8b8" stroke="#7d7d7d" stroke-width="0.5"/></g><g transform="translate(123.10000000000002,239.5)"><rect x="0.5" y="9.5" width="2.6" height="3" fill="#3d78bd" stroke="#2a5a95" stroke-width="0.5"/><rect x="3.5" y="7.0" width="2.6" height="5.5" fill="#3d78bd" stroke="#2a5a95" stroke-width="0.5"/><rect x="6.5" y="4.0" width="2.6" height="8.5" fill="#b8b8b8" stroke="#7d7d7d" stroke-width="0.5"/><rect x="9.5" y="1.0" width="2.6" height="11.5" fill="#b8b8b8" stroke="#7d7d7d" stroke-width="0.5"/></g><g transform="translate(139.39999999999998,239.5)"><rect x="0.5" y="9.5" width="2.6" height="3" fill="#3d78bd" stroke="#2a5a95" stroke-width="0.5"/><rect x="3.5" y="7.0" width="2.6" height="5.5" fill="#3d78bd" stroke="#2a5a95" stroke-width="0.5"/><rect x="6.5" y="4.0" width="2.6" height="8.5" fill="#3d78bd" stroke="#2a5a95" stroke-width="0.5"/><rect x="9.5" y="1.0" width="2.6" height="11.5" fill="#b8b8b8" stroke="#7d7d7d" stroke-width="0.5"/></g><g transform="translate(155.7,239.5)"><rect x="0.5" y="9.5" width="2.6" height="3" fill="#3d78bd" stroke="#2a5a95" stroke-width="0.5"/><rect x="3.5" y="7.0" width="2.6" height="5.5" fill="#3d78bd" stroke="#2a5a95" stroke-width="0.5"/><rect x="6.5" y="4.0" width="2.6" height="8.5" fill="#3d78bd" stroke="#2a5a95" stroke-width="0.5"/><rect x="9.5" y="1.0" width="2.6" height="11.5" fill="#3d78bd" stroke="#2a5a95" stroke-width="0.5"/></g></svg>
<div style="left:240px;top:345px;width:105.5px;height:32px;border:2px solid #d24a43"></div>
<div style="left:252px;top:352.5px;width:85.5px;height:17.5px;background:#c6c6c6"></div>
<svg style="position:absolute;left:255.5px;top:354px;" width="14" height="13" viewBox="0 0 14 13"><path d="M1.2 7L5 10.8L12.6 2.2" stroke="#3f8069" stroke-width="3.2" fill="none"/><path d="M1.2 7L5 10.8L12.6 2.2" stroke="#5aa88f" stroke-width="1.8" fill="none"/></svg>
<svg style="position:absolute;left:276.5px;top:353.5px;" width="6" height="15" viewBox="0 0 6 15"><path d="M0.8 0.6H4.6L3.6 10H1.8Z" fill="#f1c577" stroke="#b8893c" stroke-width="0.7"/><rect x="1.4" y="11.4" width="2.6" height="2.6" fill="#f1c577" stroke="#b8893c" stroke-width="0.7"/></svg>
<svg style="position:absolute;left:288.5px;top:354px;" width="13" height="13" viewBox="0 0 13 13"><path d="M1.5 1.5L11.5 11.5M11.5 1.5L1.5 11.5" stroke="#b5401f" stroke-width="3.2"/><path d="M1.5 1.5L11.5 11.5M11.5 1.5L1.5 11.5" stroke="#e2552f" stroke-width="1.8"/></svg>
</body></html>
